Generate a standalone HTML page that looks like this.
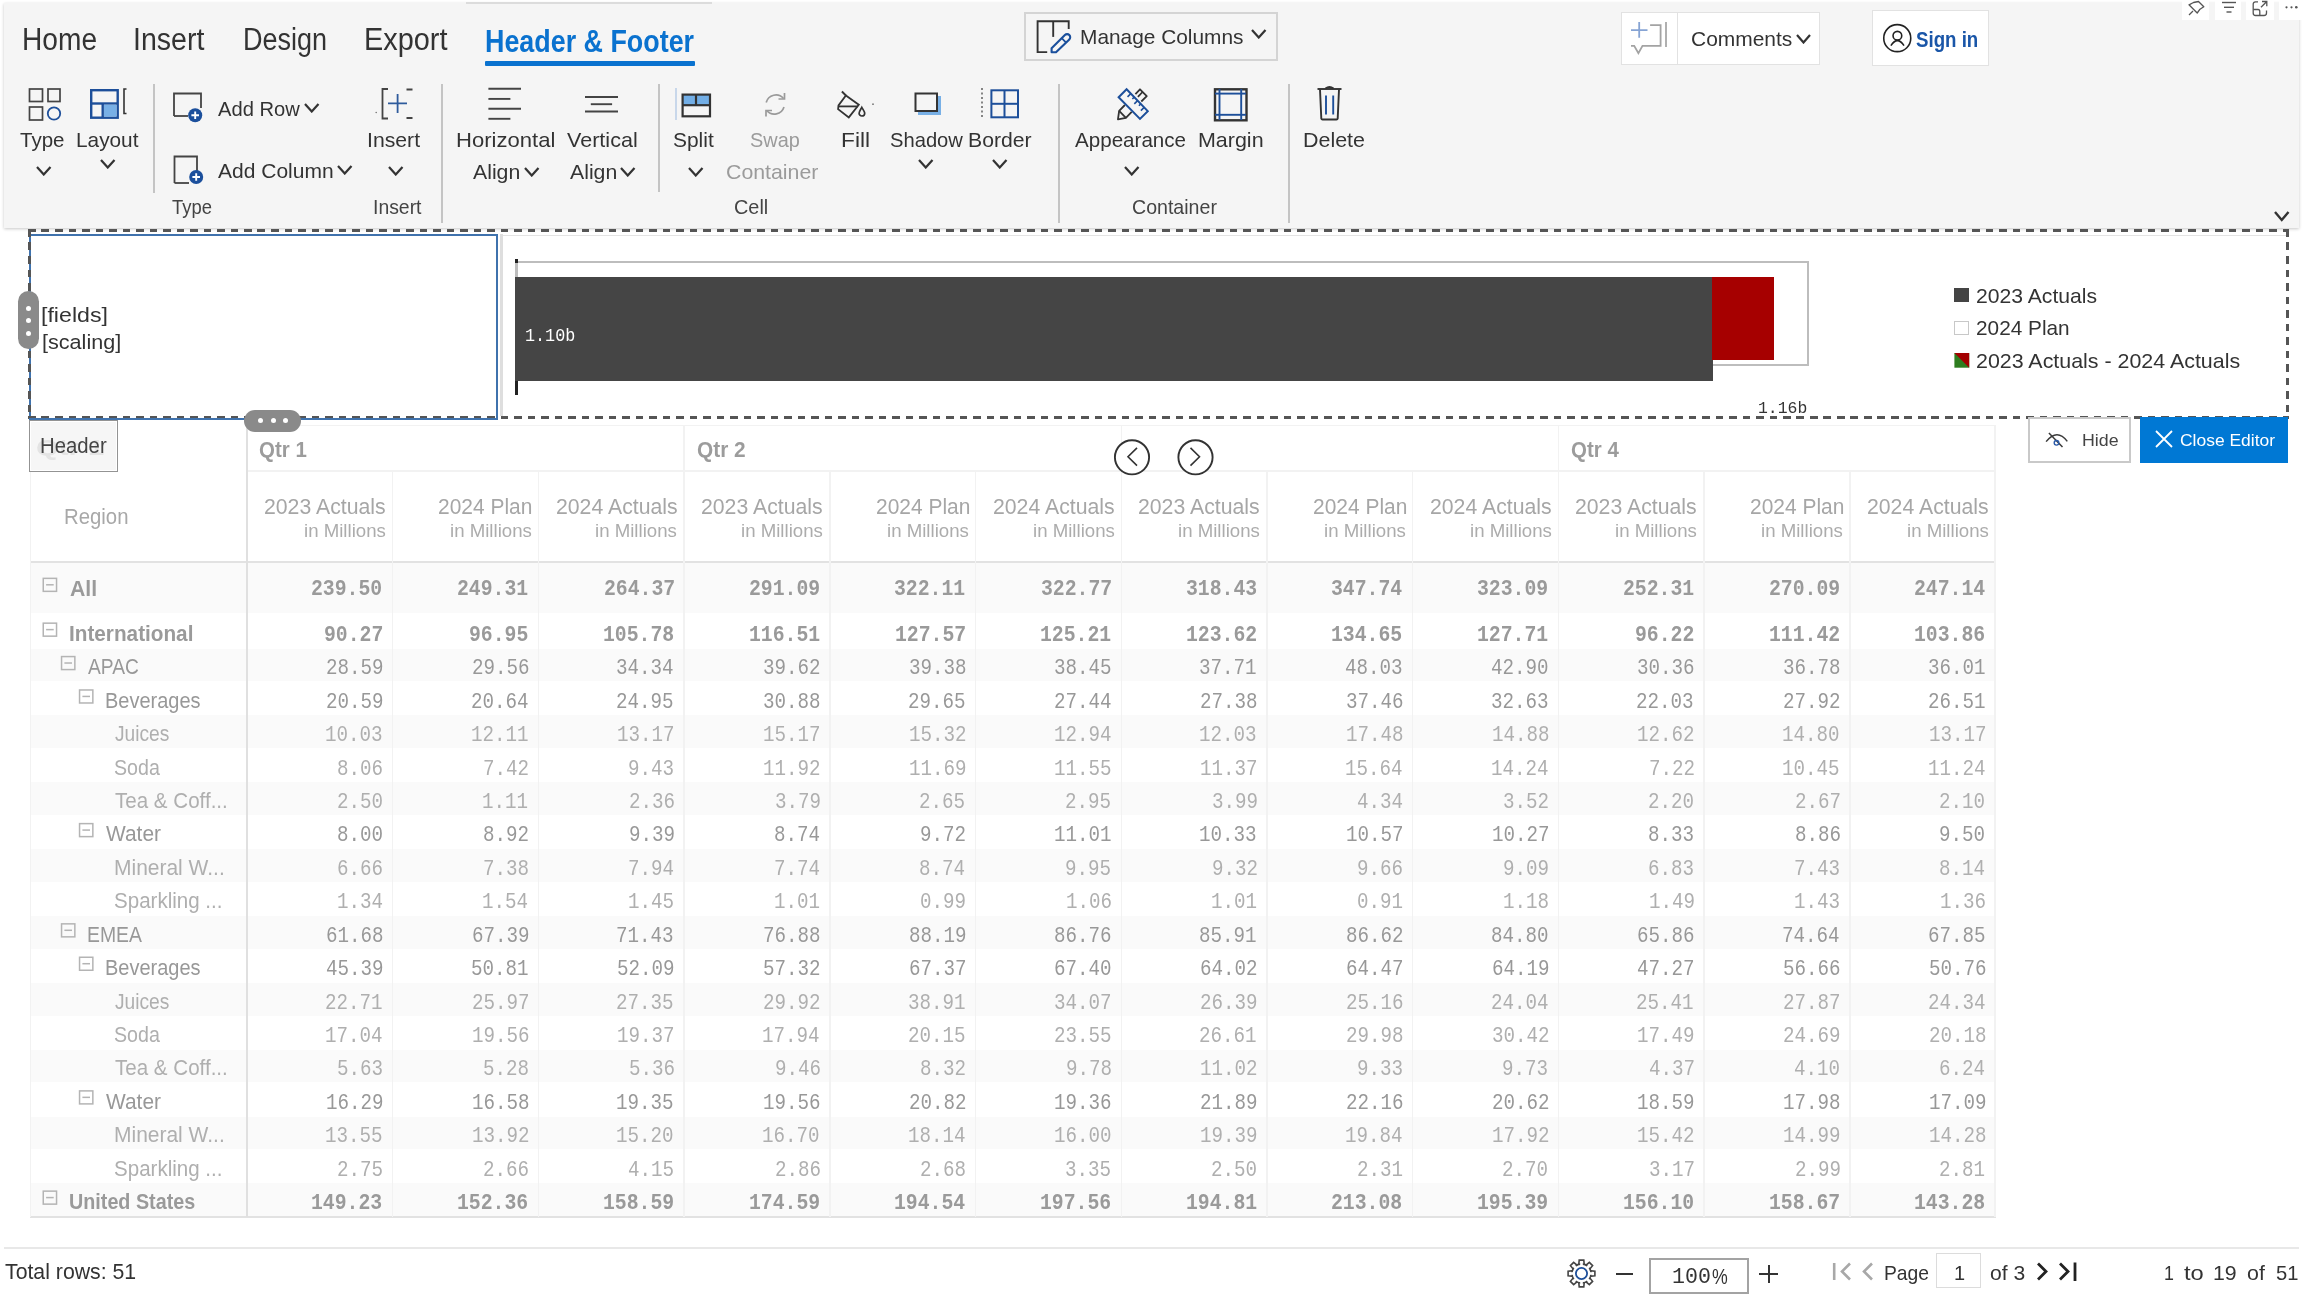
<!DOCTYPE html>
<html><head><meta charset="utf-8"><title>Header &amp; Footer</title>
<style>
html,body{margin:0;padding:0;background:#fff;width:2304px;height:1299px;overflow:hidden;position:relative;font-family:'Liberation Sans',sans-serif}
body>div,body>svg{position:absolute;box-sizing:border-box}
.t{white-space:nowrap;transform-origin:0 0}
</style></head><body>
<div style="left:4.00px;top:3.00px;width:2295.00px;height:225.00px;background:#f5f5f5;box-shadow:0 1px 3px rgba(0,0,0,0.22)"></div>
<div style="left:466.00px;top:2.00px;width:246.00px;height:1.50px;background:#dcdcdc"></div>
<div style="left:2182.00px;top:0.00px;width:27.00px;height:20.00px;background:#fff"></div>
<div style="left:2214.50px;top:0.00px;width:26.50px;height:20.00px;background:#fff"></div>
<div style="left:2246.00px;top:0.00px;width:28.00px;height:20.00px;background:#fff"></div>
<div style="left:2279.00px;top:0.00px;width:25.00px;height:20.00px;background:#fff"></div>
<div class="t" style="left:21.88px;top:25.00px;font-size:30.86px;line-height:30.86px;font-family:'Liberation Sans';color:#333;transform:scaleX(0.9113);">Home</div>
<div class="t" style="left:133.45px;top:25.00px;font-size:30.86px;line-height:30.86px;font-family:'Liberation Sans';color:#333;transform:scaleX(0.9250);">Insert</div>
<div class="t" style="left:242.95px;top:25.00px;font-size:30.86px;line-height:30.86px;font-family:'Liberation Sans';color:#333;transform:scaleX(0.8755);">Design</div>
<div class="t" style="left:363.83px;top:25.00px;font-size:30.86px;line-height:30.86px;font-family:'Liberation Sans';color:#333;transform:scaleX(0.9352);">Export</div>
<div class="t" style="left:484.76px;top:27.00px;font-size:30.86px;line-height:30.86px;font-family:'Liberation Sans';font-weight:bold;color:#0a72cf;transform:scaleX(0.8708);">Header &amp; Footer</div>
<div style="left:485.00px;top:61.00px;width:209.50px;height:4.50px;background:#0a72cf;border-radius:1px"></div>
<svg style="left:26px;top:86px" width="40" height="38" viewBox="0 0 40 38"><g fill="none" stroke="#444" stroke-width="1.7"><rect x="3.5" y="3" width="13" height="12.5"/><rect x="22" y="3" width="12" height="12.5"/><rect x="3.5" y="21" width="13" height="13"/></g><circle cx="28" cy="27.5" r="6.2" fill="none" stroke="#1d4f9a" stroke-width="1.8"/></svg>
<div class="t" style="left:20.30px;top:130.00px;font-size:20.86px;line-height:20.86px;font-family:'Liberation Sans';color:#333;transform:scaleX(0.9844);">Type</div>
<svg style="left:35px;top:165px" width="17" height="11" viewBox="0 0 17 11"><polyline points="2,2 8.75,9.5 15.5,2" fill="none" stroke="#333" stroke-width="2.2" stroke-linejoin="miter"/></svg>
<svg style="left:88px;top:86px" width="42" height="36" viewBox="0 0 42 36"><g fill="none" stroke="#1d4f9a" stroke-width="2.4"><rect x="3.2" y="4.2" width="26.5" height="27.5"/><line x1="3" y1="17.5" x2="30" y2="17.5"/><line x1="14.7" y1="17.5" x2="14.7" y2="31.5"/></g><rect x="16" y="18.8" width="12.5" height="11.8" fill="#78b0e6"/><path d="M38.5 3 H36 V27.5 H38.5" fill="none" stroke="#333" stroke-width="1.6"/></svg>
<div class="t" style="left:76.40px;top:130.00px;font-size:20.86px;line-height:20.86px;font-family:'Liberation Sans';color:#333;transform:scaleX(0.9969);">Layout</div>
<svg style="left:99px;top:158px" width="17" height="11" viewBox="0 0 17 11"><polyline points="2,2 8.75,9.5 15.5,2" fill="none" stroke="#333" stroke-width="2.2" stroke-linejoin="miter"/></svg>
<div style="left:153.00px;top:83.50px;width:2.00px;height:109.50px;background:#c4c4c4"></div>
<svg style="left:170px;top:90px" width="40" height="36" viewBox="0 0 40 36"><path d="M4 26 V3.5 H31 V18" fill="none" stroke="#444" stroke-width="1.8"/><path d="M4 26 H18" fill="none" stroke="#444" stroke-width="1.8"/><circle cx="25.2" cy="25.3" r="7" fill="#1b4f9c"/><path d="M25.2 21.5 V29.1 M21.4 25.3 H29" stroke="#fff" stroke-width="1.9"/></svg>
<div class="t" style="left:217.90px;top:99.00px;font-size:20.71px;line-height:20.71px;font-family:'Liberation Sans';color:#333;transform:scaleX(0.9732);">Add Row</div>
<svg style="left:303px;top:102px" width="17" height="11" viewBox="0 0 17 11"><polyline points="2,2 8.75,9.5 15.5,2" fill="none" stroke="#333" stroke-width="2.2" stroke-linejoin="miter"/></svg>
<svg style="left:170px;top:153px" width="40" height="36" viewBox="0 0 40 36"><path d="M4.5 30 V3.5 H27 V18" fill="none" stroke="#444" stroke-width="1.8"/><path d="M4.5 30 H19" fill="none" stroke="#444" stroke-width="1.8"/><circle cx="26.2" cy="24" r="7" fill="#1b4f9c"/><path d="M26.2 20.2 V27.8 M22.4 24 H30" stroke="#fff" stroke-width="1.9"/></svg>
<div class="t" style="left:217.90px;top:161.00px;font-size:20.71px;line-height:20.71px;font-family:'Liberation Sans';color:#333;transform:scaleX(1.0149);">Add Column</div>
<svg style="left:336px;top:164px" width="17" height="11" viewBox="0 0 17 11"><polyline points="2,2 8.75,9.5 15.5,2" fill="none" stroke="#333" stroke-width="2.2" stroke-linejoin="miter"/></svg>
<div class="t" style="left:172.00px;top:197.00px;font-size:20.43px;line-height:20.43px;font-family:'Liberation Sans';color:#444;transform:scaleX(0.9022);">Type</div>
<svg style="left:366px;top:86px" width="50" height="36" viewBox="0 0 50 36"><path d="M22 3 H16.5 V32.5 H22" fill="none" stroke="#444" stroke-width="1.8"/><path d="M31.6 8 V27 M22 17.3 H41" stroke="#2e5b9c" stroke-width="1.8"/><circle cx="10.2" cy="26.5" r="0.8" fill="#777"/><path d="M40.5 3.5 H46.5 M40.5 32 H46.5" stroke="#444" stroke-width="1.8"/></svg>
<div class="t" style="left:367.28px;top:130.00px;font-size:20.86px;line-height:20.86px;font-family:'Liberation Sans';color:#333;transform:scaleX(1.0168);">Insert</div>
<svg style="left:387px;top:165px" width="17" height="11" viewBox="0 0 17 11"><polyline points="2,2 8.75,9.5 15.5,2" fill="none" stroke="#333" stroke-width="2.2" stroke-linejoin="miter"/></svg>
<div class="t" style="left:373.05px;top:197.00px;font-size:20.43px;line-height:20.43px;font-family:'Liberation Sans';color:#444;transform:scaleX(0.9491);">Insert</div>
<div style="left:440.50px;top:84.00px;width:2.00px;height:139.00px;background:#c4c4c4"></div>
<svg style="left:484px;top:84px" width="42" height="40" viewBox="0 0 42 40"><g stroke="#444" stroke-width="1.9"><line x1="4.4" y1="4.8" x2="37" y2="4.8"/><line x1="4.4" y1="14.9" x2="26.4" y2="14.9"/><line x1="4.4" y1="24.7" x2="37" y2="24.7"/><line x1="4.4" y1="34.8" x2="26.4" y2="34.8"/></g></svg>
<div class="t" style="left:455.94px;top:130.00px;font-size:20.86px;line-height:20.86px;font-family:'Liberation Sans';color:#333;transform:scaleX(1.0574);">Horizontal</div>
<div class="t" style="left:473.30px;top:162.00px;font-size:20.86px;line-height:20.86px;font-family:'Liberation Sans';color:#333;transform:scaleX(1.0184);">Align</div>
<svg style="left:523px;top:166px" width="17" height="11" viewBox="0 0 17 11"><polyline points="2,2 8.75,9.5 15.5,2" fill="none" stroke="#333" stroke-width="2.2" stroke-linejoin="miter"/></svg>
<svg style="left:582px;top:92px" width="40" height="24" viewBox="0 0 40 24"><g stroke="#444" stroke-width="1.9"><line x1="3" y1="5" x2="36" y2="5"/><line x1="8.8" y1="12.2" x2="30.1" y2="12.2"/><line x1="3" y1="19.5" x2="36" y2="19.5"/></g></svg>
<div class="t" style="left:567.00px;top:130.00px;font-size:20.86px;line-height:20.86px;font-family:'Liberation Sans';color:#333;transform:scaleX(1.0336);">Vertical</div>
<div class="t" style="left:569.60px;top:162.00px;font-size:20.86px;line-height:20.86px;font-family:'Liberation Sans';color:#333;transform:scaleX(1.0184);">Align</div>
<svg style="left:619px;top:166px" width="17" height="11" viewBox="0 0 17 11"><polyline points="2,2 8.75,9.5 15.5,2" fill="none" stroke="#333" stroke-width="2.2" stroke-linejoin="miter"/></svg>
<div style="left:657.50px;top:84.00px;width:2.00px;height:108.00px;background:#c4c4c4"></div>
<svg style="left:672px;top:86px" width="44" height="36" viewBox="0 0 44 36"><line x1="4" y1="2" x2="4" y2="34" stroke="#b9cde6" stroke-width="1.5"/><rect x="10.6" y="8.6" width="27.4" height="10.8" fill="#72aee6"/><g fill="none" stroke="#333" stroke-width="2.2"><rect x="10.6" y="8.6" width="27.4" height="21.7"/><line x1="10" y1="19.2" x2="38" y2="19.2"/><line x1="24" y1="8" x2="24" y2="19.5"/></g></svg>
<div class="t" style="left:673.40px;top:130.00px;font-size:20.86px;line-height:20.86px;font-family:'Liberation Sans';color:#333;transform:scaleX(1.0035);">Split</div>
<svg style="left:687px;top:166px" width="17" height="11" viewBox="0 0 17 11"><polyline points="2,2 8.75,9.5 15.5,2" fill="none" stroke="#333" stroke-width="2.2" stroke-linejoin="miter"/></svg>
<svg style="left:760px;top:90px" width="32" height="30" viewBox="0 0 32 30"><g fill="none" stroke="#9a9a9a" stroke-width="1.7"><path d="M23.5 8.5 A10 10 0 0 0 6.2 12.5"/><path d="M6.8 20.5 A10 10 0 0 0 24 17"/><path d="M24.5 3 V9 H18.5"/><path d="M6 26.5 V20.5 H12"/></g></svg>
<div class="t" style="left:750.30px;top:130.00px;font-size:20.43px;line-height:20.43px;font-family:'Liberation Sans';color:#9b9b9b;transform:scaleX(0.9744);">Swap</div>
<div class="t" style="left:726.36px;top:162.00px;font-size:20.43px;line-height:20.43px;font-family:'Liberation Sans';color:#9b9b9b;transform:scaleX(1.0435);">Container</div>
<div class="t" style="left:733.83px;top:197.00px;font-size:20.43px;line-height:20.43px;font-family:'Liberation Sans';color:#444;transform:scaleX(0.9727);">Cell</div>
<svg style="left:834px;top:88px" width="42" height="34" viewBox="0 0 42 34"><g fill="none" stroke="#333" stroke-width="1.8" stroke-linejoin="miter"><path d="M7.9 3.5 L11.9 7.5"/><path d="M11.9 7.5 L24.8 16.7 L14.8 29.4 L4.1 21.1 L4.5 17.4 Z"/><line x1="4.5" y1="18.4" x2="23.8" y2="18.4"/><path d="M27.8 19.3 C26.2 22.3 25.1 23.8 25.1 25.2 A2.8 2.8 0 0 0 30.7 25.2 C30.7 23.8 29.5 22.3 27.8 19.3 Z" stroke-width="1.7"/></g><circle cx="39" cy="16.2" r="0.9" fill="#777"/></svg>
<div class="t" style="left:841.39px;top:130.00px;font-size:20.43px;line-height:20.43px;font-family:'Liberation Sans';color:#333;transform:scaleX(1.1128);">Fill</div>
<svg style="left:910px;top:88px" width="36" height="32" viewBox="0 0 36 32"><rect x="8" y="8" width="23" height="19" fill="#78b0e6"/><rect x="5.5" y="5.5" width="21.5" height="17.5" fill="#f5f5f5" stroke="#333" stroke-width="2"/></svg>
<div class="t" style="left:889.70px;top:130.00px;font-size:20.43px;line-height:20.43px;font-family:'Liberation Sans';color:#333;transform:scaleX(0.9877);">Shadow</div>
<svg style="left:917px;top:158px" width="17" height="11" viewBox="0 0 17 11"><polyline points="2,2 8.75,9.5 15.5,2" fill="none" stroke="#333" stroke-width="2.2" stroke-linejoin="miter"/></svg>
<svg style="left:978px;top:86px" width="44" height="36" viewBox="0 0 44 36"><line x1="4" y1="2" x2="4" y2="33" stroke="#555" stroke-width="1.4" stroke-dasharray="2 2.5"/><g fill="none" stroke="#1d4f9a" stroke-width="2"><rect x="13.4" y="4.3" width="26.6" height="27"/><line x1="26.5" y1="4" x2="26.5" y2="31"/><line x1="13" y1="17.8" x2="40" y2="17.8"/></g></svg>
<div class="t" style="left:967.66px;top:130.00px;font-size:20.43px;line-height:20.43px;font-family:'Liberation Sans';color:#333;transform:scaleX(1.0372);">Border</div>
<svg style="left:991px;top:158px" width="17" height="11" viewBox="0 0 17 11"><polyline points="2,2 8.75,9.5 15.5,2" fill="none" stroke="#333" stroke-width="2.2" stroke-linejoin="miter"/></svg>
<div style="left:1058.00px;top:84.00px;width:2.00px;height:139.00px;background:#c4c4c4"></div>
<svg style="left:1114px;top:86px" width="38" height="36" viewBox="0 0 38 36"><g fill="none" stroke="#333" stroke-width="1.8" stroke-linejoin="round"><path d="M10.9 19 L5.15 24.8 L3.96 33.3 L11.9 31.9 L17.7 25.8"/><path d="M5.15 24.8 L11.9 31.9"/><path d="M21.4 8.2 L26 3.3 L32.75 10.2 L27.3 15.5"/><path d="M23.9 10.8 L28.5 6"/></g><path d="M4.64 11.24 L12.6 3.28 L33.77 25.13 L25.98 32.92 Z" fill="#f5f5f5" stroke="#1d4f9a" stroke-width="2" stroke-linejoin="miter"/><path d="M16.83 7.65 l-3.30 3.20 M20.22 11.15 l-1.87 1.81 M23.61 14.64 l-3.30 3.20 M26.78 17.92 l-1.87 1.81 M30.17 21.42 l-3.30 3.20 " stroke="#1d4f9a" stroke-width="1.6"/></svg>
<div class="t" style="left:1075.00px;top:130.00px;font-size:20.43px;line-height:20.43px;font-family:'Liberation Sans';color:#333;transform:scaleX(1.0082);">Appearance</div>
<svg style="left:1123px;top:165px" width="17" height="11" viewBox="0 0 17 11"><polyline points="2,2 8.75,9.5 15.5,2" fill="none" stroke="#333" stroke-width="2.2" stroke-linejoin="miter"/></svg>
<svg style="left:1210px;top:85px" width="40" height="38" viewBox="0 0 40 38"><rect x="5" y="4.3" width="31.5" height="31" fill="none" stroke="#333" stroke-width="2.4"/><g stroke="#1d4f9a" stroke-width="1.9"><line x1="9.5" y1="4" x2="9.5" y2="35"/><line x1="31.2" y1="4" x2="31.2" y2="35"/><line x1="5" y1="8.6" x2="36" y2="8.6"/><line x1="5" y1="29.8" x2="36" y2="29.8"/></g></svg>
<div class="t" style="left:1197.85px;top:130.00px;font-size:20.43px;line-height:20.43px;font-family:'Liberation Sans';color:#333;transform:scaleX(1.0504);">Margin</div>
<div class="t" style="left:1131.54px;top:197.00px;font-size:20.43px;line-height:20.43px;font-family:'Liberation Sans';color:#444;transform:scaleX(0.9591);">Container</div>
<div style="left:1287.50px;top:84.00px;width:2.00px;height:139.00px;background:#c4c4c4"></div>
<svg style="left:1312px;top:84px" width="36" height="40" viewBox="0 0 36 40"><g fill="none" stroke="#333" stroke-width="1.9" stroke-linejoin="round"><path d="M5.5 5 H29.5"/><path d="M13.5 4.5 Q17.5 1.5 21.5 4.5"/><path d="M8 5.5 L9.3 34.5 Q9.5 35.5 10.5 35.5 H24.5 Q25.5 35.5 25.7 34.5 L27 5.5"/></g><g stroke="#1d4f9a" stroke-width="1.9"><line x1="14" y1="11.5" x2="14" y2="30.5"/><line x1="21.2" y1="11.5" x2="21.2" y2="30.5"/></g></svg>
<div class="t" style="left:1302.65px;top:130.00px;font-size:20.43px;line-height:20.43px;font-family:'Liberation Sans';color:#333;transform:scaleX(1.0497);">Delete</div>
<div style="left:1024.00px;top:12.40px;width:254.20px;height:48.70px;border:2px solid #d4d4d4"></div>
<svg style="left:1034px;top:18px" width="40" height="40" viewBox="0 0 40 40"><path d="M13.2 34.1 H3.6 V3.3 H34.7 V10.9" fill="none" stroke="#333" stroke-width="1.9"/><line x1="19.2" y1="3.3" x2="19.2" y2="18.9" stroke="#333" stroke-width="1.9"/><path d="M17.6 34.3 L17.6 30.3 L30.9 17 A3.1 3.1 0 0 1 35.3 21.4 L22 34.3 Z" fill="none" stroke="#1a4f9c" stroke-width="2.1" stroke-linejoin="round"/><line x1="27.7" y1="20.2" x2="32.1" y2="24.6" stroke="#1a4f9c" stroke-width="1.8"/></svg>
<div class="t" style="left:1080.21px;top:26.00px;font-size:21.00px;line-height:21.00px;font-family:'Liberation Sans';color:#333;transform:scaleX(0.9933);">Manage Columns</div>
<svg style="left:1250px;top:28px" width="17" height="11" viewBox="0 0 17 11"><polyline points="2,2 8.75,9.5 15.5,2" fill="none" stroke="#333" stroke-width="2.2" stroke-linejoin="miter"/></svg>
<div style="left:1620.50px;top:12.40px;width:199.90px;height:52.80px;background:#fff;border:1.5px solid #e2e2e2"></div>
<div style="left:1676.50px;top:13.00px;width:1.50px;height:52.00px;background:#e2e2e2"></div>
<svg style="left:1628px;top:19px" width="44" height="40" viewBox="0 0 44 40"><path d="M3 11.1 H19.5 M11.2 3.1 V18.7" stroke="#86a4d4" stroke-width="1.8"/><path d="M22.1 6.1 H32.6 V26.8 H14.5 L10.4 34.2 L6.2 26.8 H3" fill="none" stroke="#a3a3a3" stroke-width="1.8" stroke-linejoin="miter"/><line x1="38" y1="2.9" x2="38" y2="28.1" stroke="#a8a8a8" stroke-width="1.8"/></svg>
<div class="t" style="left:1690.97px;top:29.00px;font-size:20.43px;line-height:20.43px;font-family:'Liberation Sans';color:#333;transform:scaleX(1.0262);">Comments</div>
<svg style="left:1795px;top:33px" width="17" height="11" viewBox="0 0 17 11"><polyline points="2,2 8.5,9.5 15,2" fill="none" stroke="#333" stroke-width="2.2" stroke-linejoin="miter"/></svg>
<div style="left:1872.40px;top:9.80px;width:116.40px;height:56.60px;background:#fff;border:1.5px solid #e2e2e2"></div>
<svg style="left:1880px;top:21px" width="36" height="36" viewBox="0 0 36 36"><circle cx="17.25" cy="17.17" r="13.5" fill="none" stroke="#222" stroke-width="1.6"/><circle cx="17.4" cy="14.7" r="4.35" fill="none" stroke="#222" stroke-width="1.6"/><path d="M10.9 24.6 Q17.4 14.6 24 24.6" fill="none" stroke="#222" stroke-width="1.6"/></svg>
<div class="t" style="left:1916.40px;top:29.00px;font-size:21.71px;line-height:21.71px;font-family:'Liberation Sans';font-weight:bold;color:#1a56a8;transform:scaleX(0.8610);">Sign in</div>
<svg style="left:2186px;top:0px" width="22" height="18" viewBox="0 0 22 18"><g fill="none" stroke="#555" stroke-width="1.3" stroke-linejoin="round"><path d="M13.5 1.5 L18.8 6.8 L15 9.2 L12.2 13 L4 4.8 L8.5 2.5 Z" transform="translate(-1,0)"/><line x1="7" y1="11" x2="3" y2="15"/></g></svg>
<svg style="left:2219px;top:0px" width="20" height="16" viewBox="0 0 20 16"><g stroke="#555" stroke-width="1.4"><line x1="3" y1="2.5" x2="17" y2="2.5"/><line x1="5" y1="7.3" x2="15" y2="7.3"/><line x1="7.5" y1="12" x2="12.5" y2="12"/></g></svg>
<svg style="left:2251px;top:0px" width="20" height="18" viewBox="0 0 20 18"><g fill="none" stroke="#555" stroke-width="1.3"><path d="M7 1.8 H4.5 Q2.2 1.8 2.2 4 V13 Q2.2 15.5 4.5 15.5 H13 Q15.5 15.5 15.5 13 V10.5"/><path d="M2.2 9.5 H7 Q8.8 9.5 8.8 11.5 V15.5"/><path d="M11 1.5 H15.8 V6.3 M15.8 1.5 L10 7.3"/></g></svg>
<svg style="left:2283px;top:3px" width="20" height="10" viewBox="0 0 20 10"><g fill="#555"><circle cx="3.5" cy="4.3" r="1.1"/><circle cx="8.5" cy="4.3" r="1.1"/><circle cx="13.3" cy="4.3" r="1.3"/></g></svg>
<svg style="left:2273px;top:210px" width="17" height="12" viewBox="0 0 17 12"><polyline points="2,2 8.75,10 15.5,2" fill="none" stroke="#333" stroke-width="2.4" stroke-linejoin="miter"/></svg>
<div style="left:29.00px;top:234.00px;width:469.00px;height:186.00px;background:#fff;border:2px solid #3f72ad"></div>
<div style="left:500.00px;top:233.50px;width:3.00px;height:182.50px;background:#dedede"></div>
<div style="left:503.00px;top:234.50px;width:1784.00px;height:1.50px;background:#e3e3e3"></div>
<div style="left:28.00px;top:229.20px;width:2261.00px;height:2.50px;background:repeating-linear-gradient(90deg,#555 0 7.8px,transparent 7.8px 13.5px);background-position:0 0"></div>
<div style="left:28.00px;top:416.00px;width:2261.00px;height:2.50px;background:repeating-linear-gradient(90deg,#555 0 7.8px,transparent 7.8px 13.5px);background-position:0 0"></div>
<div style="left:28.00px;top:229.20px;width:2.50px;height:189.30px;background:repeating-linear-gradient(180deg,#555 0 7.8px,transparent 7.8px 13.5px)"></div>
<div style="left:2286.30px;top:229.20px;width:2.50px;height:189.30px;background:repeating-linear-gradient(180deg,#555 0 7.8px,transparent 7.8px 13.5px)"></div>
<div style="left:29.00px;top:418.00px;width:469.00px;height:2.00px;background:#3f72ad"></div>
<div class="t" style="left:41.47px;top:305.00px;font-size:20.50px;line-height:20.50px;font-family:'Liberation Sans';color:#333;transform:scaleX(1.1294);">[fields]</div>
<div class="t" style="left:41.55px;top:332.00px;font-size:20.50px;line-height:20.50px;font-family:'Liberation Sans';color:#333;transform:scaleX(1.0529);">[scaling]</div>
<div style="left:18.00px;top:291.00px;width:21.20px;height:57.80px;background:#8a8a8a;border-radius:11px"></div>
<div style="left:25.80px;top:305.50px;width:5.00px;height:5.00px;background:#fff;border-radius:50%"></div>
<div style="left:25.80px;top:318.20px;width:5.00px;height:5.00px;background:#fff;border-radius:50%"></div>
<div style="left:25.80px;top:330.80px;width:5.00px;height:5.00px;background:#fff;border-radius:50%"></div>
<div style="left:516.00px;top:261.00px;width:1293.00px;height:104.50px;border:2px solid #bdbdbd"></div>
<div style="left:516.00px;top:277.00px;width:1197.00px;height:104.00px;background:#454545"></div>
<div style="left:1711.70px;top:277.00px;width:62.30px;height:83.30px;background:#a60000"></div>
<div style="left:515.00px;top:258.70px;width:3.40px;height:3.90px;background:#222"></div>
<div style="left:515.00px;top:262.60px;width:3.40px;height:14.40px;background:#bdbdbd"></div>
<div style="left:515.00px;top:277.00px;width:3.40px;height:104.00px;background:#454545"></div>
<div style="left:515.00px;top:381.00px;width:3.40px;height:14.40px;background:#222"></div>
<div class="t" style="left:525.49px;top:328.00px;font-size:18.38px;line-height:18.38px;font-family:'Liberation Mono';color:#fff;transform:scaleX(0.9132);">1.10b</div>
<div class="t" style="left:1758.04px;top:400.00px;font-size:17.21px;line-height:17.21px;font-family:'Liberation Mono';color:#333;transform:scaleX(0.9551);">1.16b</div>
<div style="left:1954.40px;top:288.40px;width:14.80px;height:13.60px;background:#444"></div>
<div style="left:1954.40px;top:320.80px;width:14.80px;height:14.50px;background:#fff;border:1.5px solid #c8c8c8"></div>
<svg style="left:1954px;top:353px" width="16" height="15" viewBox="0 0 16 15"><rect x="0.4" y="0" width="14.8" height="14.7" fill="#2e7d1f"/><path d="M0.4 0 H15.2 V14.7 Z" fill="#a30000"/></svg>
<div class="t" style="left:1976.17px;top:286.00px;font-size:20.57px;line-height:20.57px;font-family:'Liberation Sans';color:#333;transform:scaleX(1.0280);">2023 Actuals</div>
<div class="t" style="left:1976.19px;top:318.00px;font-size:20.57px;line-height:20.57px;font-family:'Liberation Sans';color:#333;transform:scaleX(1.0112);">2024 Plan</div>
<div class="t" style="left:1976.16px;top:351.00px;font-size:20.57px;line-height:20.57px;font-family:'Liberation Sans';color:#333;transform:scaleX(1.0406);">2023 Actuals - 2024 Actuals</div>
<div style="left:30.00px;top:562.00px;width:1965.50px;height:51.00px;background:#fafafa"></div>
<div style="left:30.00px;top:648.60px;width:1965.50px;height:32.70px;background:#fafafa"></div>
<div style="left:30.00px;top:715.46px;width:1965.50px;height:32.70px;background:#fafafa"></div>
<div style="left:30.00px;top:782.32px;width:1965.50px;height:32.70px;background:#fafafa"></div>
<div style="left:30.00px;top:849.18px;width:1965.50px;height:32.70px;background:#fafafa"></div>
<div style="left:30.00px;top:916.04px;width:1965.50px;height:32.70px;background:#fafafa"></div>
<div style="left:30.00px;top:982.90px;width:1965.50px;height:32.70px;background:#fafafa"></div>
<div style="left:30.00px;top:1049.76px;width:1965.50px;height:32.70px;background:#fafafa"></div>
<div style="left:30.00px;top:1116.62px;width:1965.50px;height:32.70px;background:#fafafa"></div>
<div style="left:30.00px;top:1183.48px;width:1965.50px;height:32.70px;background:#fafafa"></div>
<div style="left:247.00px;top:424.50px;width:1748.50px;height:1.50px;background:#f2f2f2"></div>
<div style="left:247.00px;top:470.00px;width:1748.50px;height:1.50px;background:#f2f2f2"></div>
<div style="left:30.00px;top:560.50px;width:1965.50px;height:2.00px;background:#e2e2e2"></div>
<div style="left:30.00px;top:1216.00px;width:1965.50px;height:2.00px;background:#e2e2e2"></div>
<div style="left:29.50px;top:471.00px;width:1.50px;height:746.00px;background:#f2f2f2"></div>
<div style="left:246.00px;top:425.00px;width:2.30px;height:792.00px;background:#e0e0e0"></div>
<div style="left:391.96px;top:471.00px;width:1.50px;height:746.00px;background:#f2f2f2"></div>
<div style="left:537.67px;top:471.00px;width:1.50px;height:746.00px;background:#f2f2f2"></div>
<div style="left:683.38px;top:425.00px;width:1.50px;height:792.00px;background:#f2f2f2"></div>
<div style="left:829.08px;top:471.00px;width:1.50px;height:746.00px;background:#f2f2f2"></div>
<div style="left:974.79px;top:471.00px;width:1.50px;height:746.00px;background:#f2f2f2"></div>
<div style="left:1120.50px;top:425.00px;width:1.50px;height:792.00px;background:#f2f2f2"></div>
<div style="left:1266.21px;top:471.00px;width:1.50px;height:746.00px;background:#f2f2f2"></div>
<div style="left:1411.92px;top:471.00px;width:1.50px;height:746.00px;background:#f2f2f2"></div>
<div style="left:1557.62px;top:425.00px;width:1.50px;height:792.00px;background:#f2f2f2"></div>
<div style="left:1703.33px;top:471.00px;width:1.50px;height:746.00px;background:#f2f2f2"></div>
<div style="left:1849.04px;top:471.00px;width:1.50px;height:746.00px;background:#f2f2f2"></div>
<div style="left:1994.00px;top:425.00px;width:1.50px;height:792.00px;background:#f2f2f2"></div>
<div class="t" style="left:259.40px;top:438.00px;font-size:22.86px;line-height:22.86px;font-family:'Liberation Sans';font-weight:bold;color:#9c9c9c;transform:scaleX(0.8953);">Qtr 1</div>
<div class="t" style="left:696.52px;top:438.00px;font-size:22.86px;line-height:22.86px;font-family:'Liberation Sans';font-weight:bold;color:#9c9c9c;transform:scaleX(0.9123);">Qtr 2</div>
<div class="t" style="left:1570.78px;top:438.00px;font-size:22.86px;line-height:22.86px;font-family:'Liberation Sans';font-weight:bold;color:#9c9c9c;transform:scaleX(0.8953);">Qtr 4</div>
<div class="t" style="left:264.12px;top:497.00px;font-size:21.43px;line-height:21.43px;font-family:'Liberation Sans';color:#a6a6a6;transform:scaleX(0.9913);">2023 Actuals</div>
<div class="t" style="left:304.05px;top:523.00px;font-size:17.71px;line-height:17.71px;font-family:'Liberation Sans';color:#acacac;transform:scaleX(1.0538);">in Millions</div>
<div class="t" style="left:438.44px;top:497.00px;font-size:21.43px;line-height:21.43px;font-family:'Liberation Sans';color:#a6a6a6;transform:scaleX(0.9777);">2024 Plan</div>
<div class="t" style="left:449.76px;top:523.00px;font-size:17.71px;line-height:17.71px;font-family:'Liberation Sans';color:#acacac;transform:scaleX(1.0538);">in Millions</div>
<div class="t" style="left:555.53px;top:497.00px;font-size:21.43px;line-height:21.43px;font-family:'Liberation Sans';color:#a6a6a6;transform:scaleX(0.9913);">2024 Actuals</div>
<div class="t" style="left:595.47px;top:523.00px;font-size:17.71px;line-height:17.71px;font-family:'Liberation Sans';color:#acacac;transform:scaleX(1.0538);">in Millions</div>
<div class="t" style="left:701.24px;top:497.00px;font-size:21.43px;line-height:21.43px;font-family:'Liberation Sans';color:#a6a6a6;transform:scaleX(0.9913);">2023 Actuals</div>
<div class="t" style="left:741.18px;top:523.00px;font-size:17.71px;line-height:17.71px;font-family:'Liberation Sans';color:#acacac;transform:scaleX(1.0538);">in Millions</div>
<div class="t" style="left:875.56px;top:497.00px;font-size:21.43px;line-height:21.43px;font-family:'Liberation Sans';color:#a6a6a6;transform:scaleX(0.9777);">2024 Plan</div>
<div class="t" style="left:886.89px;top:523.00px;font-size:17.71px;line-height:17.71px;font-family:'Liberation Sans';color:#acacac;transform:scaleX(1.0538);">in Millions</div>
<div class="t" style="left:992.66px;top:497.00px;font-size:21.43px;line-height:21.43px;font-family:'Liberation Sans';color:#a6a6a6;transform:scaleX(0.9913);">2024 Actuals</div>
<div class="t" style="left:1032.60px;top:523.00px;font-size:17.71px;line-height:17.71px;font-family:'Liberation Sans';color:#acacac;transform:scaleX(1.0538);">in Millions</div>
<div class="t" style="left:1138.37px;top:497.00px;font-size:21.43px;line-height:21.43px;font-family:'Liberation Sans';color:#a6a6a6;transform:scaleX(0.9913);">2023 Actuals</div>
<div class="t" style="left:1178.30px;top:523.00px;font-size:17.71px;line-height:17.71px;font-family:'Liberation Sans';color:#acacac;transform:scaleX(1.0538);">in Millions</div>
<div class="t" style="left:1312.69px;top:497.00px;font-size:21.43px;line-height:21.43px;font-family:'Liberation Sans';color:#a6a6a6;transform:scaleX(0.9777);">2024 Plan</div>
<div class="t" style="left:1324.01px;top:523.00px;font-size:17.71px;line-height:17.71px;font-family:'Liberation Sans';color:#acacac;transform:scaleX(1.0538);">in Millions</div>
<div class="t" style="left:1429.78px;top:497.00px;font-size:21.43px;line-height:21.43px;font-family:'Liberation Sans';color:#a6a6a6;transform:scaleX(0.9913);">2024 Actuals</div>
<div class="t" style="left:1469.72px;top:523.00px;font-size:17.71px;line-height:17.71px;font-family:'Liberation Sans';color:#acacac;transform:scaleX(1.0538);">in Millions</div>
<div class="t" style="left:1575.49px;top:497.00px;font-size:21.43px;line-height:21.43px;font-family:'Liberation Sans';color:#a6a6a6;transform:scaleX(0.9913);">2023 Actuals</div>
<div class="t" style="left:1615.43px;top:523.00px;font-size:17.71px;line-height:17.71px;font-family:'Liberation Sans';color:#acacac;transform:scaleX(1.0538);">in Millions</div>
<div class="t" style="left:1749.81px;top:497.00px;font-size:21.43px;line-height:21.43px;font-family:'Liberation Sans';color:#a6a6a6;transform:scaleX(0.9777);">2024 Plan</div>
<div class="t" style="left:1761.14px;top:523.00px;font-size:17.71px;line-height:17.71px;font-family:'Liberation Sans';color:#acacac;transform:scaleX(1.0538);">in Millions</div>
<div class="t" style="left:1866.91px;top:497.00px;font-size:21.43px;line-height:21.43px;font-family:'Liberation Sans';color:#a6a6a6;transform:scaleX(0.9913);">2024 Actuals</div>
<div class="t" style="left:1906.85px;top:523.00px;font-size:17.71px;line-height:17.71px;font-family:'Liberation Sans';color:#acacac;transform:scaleX(1.0538);">in Millions</div>
<div class="t" style="left:63.68px;top:506.00px;font-size:22.00px;line-height:22.00px;font-family:'Liberation Sans';color:#a8a8a8;transform:scaleX(0.9247);">Region</div>
<div class="t" style="left:69.90px;top:577.00px;font-size:22.86px;line-height:22.86px;font-family:'Liberation Sans';font-weight:bold;color:#9a9a9a;transform:scaleX(0.9302);">All</div>
<svg style="left:41px;top:576px" width="18" height="17" viewBox="0 0 18 17"><rect x="2.25" y="2.35" width="13.3" height="13" fill="none" stroke="#b4b4b4" stroke-width="1.5"/><line x1="5.10" y1="8.80" x2="12.70" y2="8.80" stroke="#b4b4b4" stroke-width="1.5"/></svg>
<div class="t" style="left:311.47px;top:578.00px;font-size:22.40px;line-height:22.40px;font-family:'Liberation Mono';font-weight:bold;color:#9a9a9a;transform:scaleX(0.8834);">239.50</div>
<div class="t" style="left:457.18px;top:578.00px;font-size:22.40px;line-height:22.40px;font-family:'Liberation Mono';font-weight:bold;color:#9a9a9a;transform:scaleX(0.8834);">249.31</div>
<div class="t" style="left:603.77px;top:578.00px;font-size:22.40px;line-height:22.40px;font-family:'Liberation Mono';font-weight:bold;color:#9a9a9a;transform:scaleX(0.8834);">264.37</div>
<div class="t" style="left:748.60px;top:578.00px;font-size:22.40px;line-height:22.40px;font-family:'Liberation Mono';font-weight:bold;color:#9a9a9a;transform:scaleX(0.8834);">291.09</div>
<div class="t" style="left:894.30px;top:578.00px;font-size:22.40px;line-height:22.40px;font-family:'Liberation Mono';font-weight:bold;color:#9a9a9a;transform:scaleX(0.8834);">322.11</div>
<div class="t" style="left:1040.90px;top:578.00px;font-size:22.40px;line-height:22.40px;font-family:'Liberation Mono';font-weight:bold;color:#9a9a9a;transform:scaleX(0.8834);">322.77</div>
<div class="t" style="left:1185.72px;top:578.00px;font-size:22.40px;line-height:22.40px;font-family:'Liberation Mono';font-weight:bold;color:#9a9a9a;transform:scaleX(0.8834);">318.43</div>
<div class="t" style="left:1331.43px;top:578.00px;font-size:22.40px;line-height:22.40px;font-family:'Liberation Mono';font-weight:bold;color:#9a9a9a;transform:scaleX(0.8834);">347.74</div>
<div class="t" style="left:1477.14px;top:578.00px;font-size:22.40px;line-height:22.40px;font-family:'Liberation Mono';font-weight:bold;color:#9a9a9a;transform:scaleX(0.8834);">323.09</div>
<div class="t" style="left:1622.85px;top:578.00px;font-size:22.40px;line-height:22.40px;font-family:'Liberation Mono';font-weight:bold;color:#9a9a9a;transform:scaleX(0.8834);">252.31</div>
<div class="t" style="left:1768.55px;top:578.00px;font-size:22.40px;line-height:22.40px;font-family:'Liberation Mono';font-weight:bold;color:#9a9a9a;transform:scaleX(0.8834);">270.09</div>
<div class="t" style="left:1914.26px;top:578.00px;font-size:22.40px;line-height:22.40px;font-family:'Liberation Mono';font-weight:bold;color:#9a9a9a;transform:scaleX(0.8834);">247.14</div>
<div class="t" style="left:68.99px;top:622.00px;font-size:22.86px;line-height:22.86px;font-family:'Liberation Sans';font-weight:bold;color:#9a9a9a;transform:scaleX(0.9070);">International</div>
<svg style="left:41px;top:621px" width="18" height="17" viewBox="0 0 18 17"><rect x="2.25" y="2.16" width="13.3" height="13" fill="none" stroke="#b4b4b4" stroke-width="1.5"/><line x1="5.10" y1="8.61" x2="12.70" y2="8.61" stroke="#b4b4b4" stroke-width="1.5"/></svg>
<div class="t" style="left:324.22px;top:624.00px;font-size:22.40px;line-height:22.40px;font-family:'Liberation Mono';font-weight:bold;color:#9a9a9a;transform:scaleX(0.8834);">90.27</div>
<div class="t" style="left:469.05px;top:624.00px;font-size:22.40px;line-height:22.40px;font-family:'Liberation Mono';font-weight:bold;color:#9a9a9a;transform:scaleX(0.8834);">96.95</div>
<div class="t" style="left:602.89px;top:624.00px;font-size:22.40px;line-height:22.40px;font-family:'Liberation Mono';font-weight:bold;color:#9a9a9a;transform:scaleX(0.8834);">105.78</div>
<div class="t" style="left:748.60px;top:624.00px;font-size:22.40px;line-height:22.40px;font-family:'Liberation Mono';font-weight:bold;color:#9a9a9a;transform:scaleX(0.8834);">116.51</div>
<div class="t" style="left:895.19px;top:624.00px;font-size:22.40px;line-height:22.40px;font-family:'Liberation Mono';font-weight:bold;color:#9a9a9a;transform:scaleX(0.8834);">127.57</div>
<div class="t" style="left:1040.01px;top:624.00px;font-size:22.40px;line-height:22.40px;font-family:'Liberation Mono';font-weight:bold;color:#9a9a9a;transform:scaleX(0.8834);">125.21</div>
<div class="t" style="left:1185.72px;top:624.00px;font-size:22.40px;line-height:22.40px;font-family:'Liberation Mono';font-weight:bold;color:#9a9a9a;transform:scaleX(0.8834);">123.62</div>
<div class="t" style="left:1331.43px;top:624.00px;font-size:22.40px;line-height:22.40px;font-family:'Liberation Mono';font-weight:bold;color:#9a9a9a;transform:scaleX(0.8834);">134.65</div>
<div class="t" style="left:1477.14px;top:624.00px;font-size:22.40px;line-height:22.40px;font-family:'Liberation Mono';font-weight:bold;color:#9a9a9a;transform:scaleX(0.8834);">127.71</div>
<div class="t" style="left:1634.72px;top:624.00px;font-size:22.40px;line-height:22.40px;font-family:'Liberation Mono';font-weight:bold;color:#9a9a9a;transform:scaleX(0.8834);">96.22</div>
<div class="t" style="left:1768.55px;top:624.00px;font-size:22.40px;line-height:22.40px;font-family:'Liberation Mono';font-weight:bold;color:#9a9a9a;transform:scaleX(0.8834);">111.42</div>
<div class="t" style="left:1914.26px;top:624.00px;font-size:22.40px;line-height:22.40px;font-family:'Liberation Mono';font-weight:bold;color:#9a9a9a;transform:scaleX(0.8834);">103.86</div>
<div class="t" style="left:87.90px;top:655.00px;font-size:22.86px;line-height:22.86px;font-family:'Liberation Sans';color:#989898;transform:scaleX(0.8398);">APAC</div>
<svg style="left:59px;top:654px" width="18" height="17" viewBox="0 0 18 17"><rect x="2.55" y="2.57" width="13.3" height="13" fill="none" stroke="#b4b4b4" stroke-width="1.5"/><line x1="5.40" y1="9.02" x2="13.00" y2="9.02" stroke="#b4b4b4" stroke-width="1.5"/></svg>
<div class="t" style="left:325.91px;top:657.00px;font-size:22.40px;line-height:22.40px;font-family:'Liberation Mono';color:#989898;transform:scaleX(0.8578);">28.59</div>
<div class="t" style="left:471.62px;top:657.00px;font-size:22.40px;line-height:22.40px;font-family:'Liberation Mono';color:#989898;transform:scaleX(0.8578);">29.56</div>
<div class="t" style="left:616.47px;top:657.00px;font-size:22.40px;line-height:22.40px;font-family:'Liberation Mono';color:#989898;transform:scaleX(0.8578);">34.34</div>
<div class="t" style="left:763.03px;top:657.00px;font-size:22.40px;line-height:22.40px;font-family:'Liberation Mono';color:#989898;transform:scaleX(0.8578);">39.62</div>
<div class="t" style="left:908.74px;top:657.00px;font-size:22.40px;line-height:22.40px;font-family:'Liberation Mono';color:#989898;transform:scaleX(0.8578);">39.38</div>
<div class="t" style="left:1053.59px;top:657.00px;font-size:22.40px;line-height:22.40px;font-family:'Liberation Mono';color:#989898;transform:scaleX(0.8578);">38.45</div>
<div class="t" style="left:1199.30px;top:657.00px;font-size:22.40px;line-height:22.40px;font-family:'Liberation Mono';color:#989898;transform:scaleX(0.8578);">37.71</div>
<div class="t" style="left:1345.01px;top:657.00px;font-size:22.40px;line-height:22.40px;font-family:'Liberation Mono';color:#989898;transform:scaleX(0.8578);">48.03</div>
<div class="t" style="left:1490.72px;top:657.00px;font-size:22.40px;line-height:22.40px;font-family:'Liberation Mono';color:#989898;transform:scaleX(0.8578);">42.90</div>
<div class="t" style="left:1637.28px;top:657.00px;font-size:22.40px;line-height:22.40px;font-family:'Liberation Mono';color:#989898;transform:scaleX(0.8578);">30.36</div>
<div class="t" style="left:1782.99px;top:657.00px;font-size:22.40px;line-height:22.40px;font-family:'Liberation Mono';color:#989898;transform:scaleX(0.8578);">36.78</div>
<div class="t" style="left:1927.84px;top:657.00px;font-size:22.40px;line-height:22.40px;font-family:'Liberation Mono';color:#989898;transform:scaleX(0.8578);">36.01</div>
<div class="t" style="left:105.33px;top:689.00px;font-size:22.86px;line-height:22.86px;font-family:'Liberation Sans';color:#989898;transform:scaleX(0.8739);">Beverages</div>
<svg style="left:77px;top:688px" width="18" height="17" viewBox="0 0 18 17"><rect x="2.55" y="1.98" width="13.3" height="13" fill="none" stroke="#b4b4b4" stroke-width="1.5"/><line x1="5.40" y1="8.43" x2="13.00" y2="8.43" stroke="#b4b4b4" stroke-width="1.5"/></svg>
<div class="t" style="left:325.91px;top:691.00px;font-size:22.40px;line-height:22.40px;font-family:'Liberation Mono';color:#989898;transform:scaleX(0.8578);">20.59</div>
<div class="t" style="left:470.76px;top:691.00px;font-size:22.40px;line-height:22.40px;font-family:'Liberation Mono';color:#989898;transform:scaleX(0.8578);">20.64</div>
<div class="t" style="left:616.47px;top:691.00px;font-size:22.40px;line-height:22.40px;font-family:'Liberation Mono';color:#989898;transform:scaleX(0.8578);">24.95</div>
<div class="t" style="left:763.03px;top:691.00px;font-size:22.40px;line-height:22.40px;font-family:'Liberation Mono';color:#989898;transform:scaleX(0.8578);">30.88</div>
<div class="t" style="left:907.88px;top:691.00px;font-size:22.40px;line-height:22.40px;font-family:'Liberation Mono';color:#989898;transform:scaleX(0.8578);">29.65</div>
<div class="t" style="left:1053.59px;top:691.00px;font-size:22.40px;line-height:22.40px;font-family:'Liberation Mono';color:#989898;transform:scaleX(0.8578);">27.44</div>
<div class="t" style="left:1200.16px;top:691.00px;font-size:22.40px;line-height:22.40px;font-family:'Liberation Mono';color:#989898;transform:scaleX(0.8578);">27.38</div>
<div class="t" style="left:1345.87px;top:691.00px;font-size:22.40px;line-height:22.40px;font-family:'Liberation Mono';color:#989898;transform:scaleX(0.8578);">37.46</div>
<div class="t" style="left:1490.72px;top:691.00px;font-size:22.40px;line-height:22.40px;font-family:'Liberation Mono';color:#989898;transform:scaleX(0.8578);">32.63</div>
<div class="t" style="left:1636.43px;top:691.00px;font-size:22.40px;line-height:22.40px;font-family:'Liberation Mono';color:#989898;transform:scaleX(0.8578);">22.03</div>
<div class="t" style="left:1782.99px;top:691.00px;font-size:22.40px;line-height:22.40px;font-family:'Liberation Mono';color:#989898;transform:scaleX(0.8578);">27.92</div>
<div class="t" style="left:1927.84px;top:691.00px;font-size:22.40px;line-height:22.40px;font-family:'Liberation Mono';color:#989898;transform:scaleX(0.8578);">26.51</div>
<div class="t" style="left:114.50px;top:722.00px;font-size:22.86px;line-height:22.86px;font-family:'Liberation Sans';color:#afafaf;transform:scaleX(0.8394);">Juices</div>
<div class="t" style="left:325.05px;top:724.00px;font-size:22.40px;line-height:22.40px;font-family:'Liberation Mono';color:#afafaf;transform:scaleX(0.8578);">10.03</div>
<div class="t" style="left:470.76px;top:724.00px;font-size:22.40px;line-height:22.40px;font-family:'Liberation Mono';color:#afafaf;transform:scaleX(0.8578);">12.11</div>
<div class="t" style="left:617.33px;top:724.00px;font-size:22.40px;line-height:22.40px;font-family:'Liberation Mono';color:#afafaf;transform:scaleX(0.8578);">13.17</div>
<div class="t" style="left:763.03px;top:724.00px;font-size:22.40px;line-height:22.40px;font-family:'Liberation Mono';color:#afafaf;transform:scaleX(0.8578);">15.17</div>
<div class="t" style="left:908.74px;top:724.00px;font-size:22.40px;line-height:22.40px;font-family:'Liberation Mono';color:#afafaf;transform:scaleX(0.8578);">15.32</div>
<div class="t" style="left:1053.59px;top:724.00px;font-size:22.40px;line-height:22.40px;font-family:'Liberation Mono';color:#afafaf;transform:scaleX(0.8578);">12.94</div>
<div class="t" style="left:1199.30px;top:724.00px;font-size:22.40px;line-height:22.40px;font-family:'Liberation Mono';color:#afafaf;transform:scaleX(0.8578);">12.03</div>
<div class="t" style="left:1345.87px;top:724.00px;font-size:22.40px;line-height:22.40px;font-family:'Liberation Mono';color:#afafaf;transform:scaleX(0.8578);">17.48</div>
<div class="t" style="left:1491.57px;top:724.00px;font-size:22.40px;line-height:22.40px;font-family:'Liberation Mono';color:#afafaf;transform:scaleX(0.8578);">14.88</div>
<div class="t" style="left:1637.28px;top:724.00px;font-size:22.40px;line-height:22.40px;font-family:'Liberation Mono';color:#afafaf;transform:scaleX(0.8578);">12.62</div>
<div class="t" style="left:1782.13px;top:724.00px;font-size:22.40px;line-height:22.40px;font-family:'Liberation Mono';color:#afafaf;transform:scaleX(0.8578);">14.80</div>
<div class="t" style="left:1928.70px;top:724.00px;font-size:22.40px;line-height:22.40px;font-family:'Liberation Mono';color:#afafaf;transform:scaleX(0.8578);">13.17</div>
<div class="t" style="left:113.64px;top:756.00px;font-size:22.86px;line-height:22.86px;font-family:'Liberation Sans';color:#afafaf;transform:scaleX(0.8586);">Soda</div>
<div class="t" style="left:337.43px;top:758.00px;font-size:22.40px;line-height:22.40px;font-family:'Liberation Mono';color:#afafaf;transform:scaleX(0.8578);">8.06</div>
<div class="t" style="left:483.14px;top:758.00px;font-size:22.40px;line-height:22.40px;font-family:'Liberation Mono';color:#afafaf;transform:scaleX(0.8578);">7.42</div>
<div class="t" style="left:627.99px;top:758.00px;font-size:22.40px;line-height:22.40px;font-family:'Liberation Mono';color:#afafaf;transform:scaleX(0.8578);">9.43</div>
<div class="t" style="left:763.03px;top:758.00px;font-size:22.40px;line-height:22.40px;font-family:'Liberation Mono';color:#afafaf;transform:scaleX(0.8578);">11.92</div>
<div class="t" style="left:908.74px;top:758.00px;font-size:22.40px;line-height:22.40px;font-family:'Liberation Mono';color:#afafaf;transform:scaleX(0.8578);">11.69</div>
<div class="t" style="left:1053.59px;top:758.00px;font-size:22.40px;line-height:22.40px;font-family:'Liberation Mono';color:#afafaf;transform:scaleX(0.8578);">11.55</div>
<div class="t" style="left:1200.16px;top:758.00px;font-size:22.40px;line-height:22.40px;font-family:'Liberation Mono';color:#afafaf;transform:scaleX(0.8578);">11.37</div>
<div class="t" style="left:1345.01px;top:758.00px;font-size:22.40px;line-height:22.40px;font-family:'Liberation Mono';color:#afafaf;transform:scaleX(0.8578);">15.64</div>
<div class="t" style="left:1490.72px;top:758.00px;font-size:22.40px;line-height:22.40px;font-family:'Liberation Mono';color:#afafaf;transform:scaleX(0.8578);">14.24</div>
<div class="t" style="left:1648.81px;top:758.00px;font-size:22.40px;line-height:22.40px;font-family:'Liberation Mono';color:#afafaf;transform:scaleX(0.8578);">7.22</div>
<div class="t" style="left:1782.13px;top:758.00px;font-size:22.40px;line-height:22.40px;font-family:'Liberation Mono';color:#afafaf;transform:scaleX(0.8578);">10.45</div>
<div class="t" style="left:1927.84px;top:758.00px;font-size:22.40px;line-height:22.40px;font-family:'Liberation Mono';color:#afafaf;transform:scaleX(0.8578);">11.24</div>
<div class="t" style="left:114.50px;top:789.00px;font-size:22.86px;line-height:22.86px;font-family:'Liberation Sans';color:#afafaf;transform:scaleX(0.8997);">Tea &amp; Coff...</div>
<div class="t" style="left:336.58px;top:791.00px;font-size:22.40px;line-height:22.40px;font-family:'Liberation Mono';color:#afafaf;transform:scaleX(0.8578);">2.50</div>
<div class="t" style="left:482.29px;top:791.00px;font-size:22.40px;line-height:22.40px;font-family:'Liberation Mono';color:#afafaf;transform:scaleX(0.8578);">1.11</div>
<div class="t" style="left:628.85px;top:791.00px;font-size:22.40px;line-height:22.40px;font-family:'Liberation Mono';color:#afafaf;transform:scaleX(0.8578);">2.36</div>
<div class="t" style="left:774.56px;top:791.00px;font-size:22.40px;line-height:22.40px;font-family:'Liberation Mono';color:#afafaf;transform:scaleX(0.8578);">3.79</div>
<div class="t" style="left:919.41px;top:791.00px;font-size:22.40px;line-height:22.40px;font-family:'Liberation Mono';color:#afafaf;transform:scaleX(0.8578);">2.65</div>
<div class="t" style="left:1065.12px;top:791.00px;font-size:22.40px;line-height:22.40px;font-family:'Liberation Mono';color:#afafaf;transform:scaleX(0.8578);">2.95</div>
<div class="t" style="left:1211.68px;top:791.00px;font-size:22.40px;line-height:22.40px;font-family:'Liberation Mono';color:#afafaf;transform:scaleX(0.8578);">3.99</div>
<div class="t" style="left:1356.54px;top:791.00px;font-size:22.40px;line-height:22.40px;font-family:'Liberation Mono';color:#afafaf;transform:scaleX(0.8578);">4.34</div>
<div class="t" style="left:1503.10px;top:791.00px;font-size:22.40px;line-height:22.40px;font-family:'Liberation Mono';color:#afafaf;transform:scaleX(0.8578);">3.52</div>
<div class="t" style="left:1647.95px;top:791.00px;font-size:22.40px;line-height:22.40px;font-family:'Liberation Mono';color:#afafaf;transform:scaleX(0.8578);">2.20</div>
<div class="t" style="left:1794.52px;top:791.00px;font-size:22.40px;line-height:22.40px;font-family:'Liberation Mono';color:#afafaf;transform:scaleX(0.8578);">2.67</div>
<div class="t" style="left:1939.37px;top:791.00px;font-size:22.40px;line-height:22.40px;font-family:'Liberation Mono';color:#afafaf;transform:scaleX(0.8578);">2.10</div>
<div class="t" style="left:106.20px;top:822.00px;font-size:22.86px;line-height:22.86px;font-family:'Liberation Sans';color:#989898;transform:scaleX(0.9145);">Water</div>
<svg style="left:77px;top:821px" width="18" height="17" viewBox="0 0 18 17"><rect x="2.55" y="2.62" width="13.3" height="13" fill="none" stroke="#b4b4b4" stroke-width="1.5"/><line x1="5.40" y1="9.07" x2="13.00" y2="9.07" stroke="#b4b4b4" stroke-width="1.5"/></svg>
<div class="t" style="left:336.58px;top:824.00px;font-size:22.40px;line-height:22.40px;font-family:'Liberation Mono';color:#989898;transform:scaleX(0.8578);">8.00</div>
<div class="t" style="left:483.14px;top:824.00px;font-size:22.40px;line-height:22.40px;font-family:'Liberation Mono';color:#989898;transform:scaleX(0.8578);">8.92</div>
<div class="t" style="left:628.85px;top:824.00px;font-size:22.40px;line-height:22.40px;font-family:'Liberation Mono';color:#989898;transform:scaleX(0.8578);">9.39</div>
<div class="t" style="left:773.70px;top:824.00px;font-size:22.40px;line-height:22.40px;font-family:'Liberation Mono';color:#989898;transform:scaleX(0.8578);">8.74</div>
<div class="t" style="left:920.27px;top:824.00px;font-size:22.40px;line-height:22.40px;font-family:'Liberation Mono';color:#989898;transform:scaleX(0.8578);">9.72</div>
<div class="t" style="left:1053.59px;top:824.00px;font-size:22.40px;line-height:22.40px;font-family:'Liberation Mono';color:#989898;transform:scaleX(0.8578);">11.01</div>
<div class="t" style="left:1199.30px;top:824.00px;font-size:22.40px;line-height:22.40px;font-family:'Liberation Mono';color:#989898;transform:scaleX(0.8578);">10.33</div>
<div class="t" style="left:1345.87px;top:824.00px;font-size:22.40px;line-height:22.40px;font-family:'Liberation Mono';color:#989898;transform:scaleX(0.8578);">10.57</div>
<div class="t" style="left:1491.57px;top:824.00px;font-size:22.40px;line-height:22.40px;font-family:'Liberation Mono';color:#989898;transform:scaleX(0.8578);">10.27</div>
<div class="t" style="left:1647.95px;top:824.00px;font-size:22.40px;line-height:22.40px;font-family:'Liberation Mono';color:#989898;transform:scaleX(0.8578);">8.33</div>
<div class="t" style="left:1794.52px;top:824.00px;font-size:22.40px;line-height:22.40px;font-family:'Liberation Mono';color:#989898;transform:scaleX(0.8578);">8.86</div>
<div class="t" style="left:1939.37px;top:824.00px;font-size:22.40px;line-height:22.40px;font-family:'Liberation Mono';color:#989898;transform:scaleX(0.8578);">9.50</div>
<div class="t" style="left:113.58px;top:856.00px;font-size:22.86px;line-height:22.86px;font-family:'Liberation Sans';color:#afafaf;transform:scaleX(0.9176);">Mineral W...</div>
<div class="t" style="left:337.43px;top:858.00px;font-size:22.40px;line-height:22.40px;font-family:'Liberation Mono';color:#afafaf;transform:scaleX(0.8578);">6.66</div>
<div class="t" style="left:483.14px;top:858.00px;font-size:22.40px;line-height:22.40px;font-family:'Liberation Mono';color:#afafaf;transform:scaleX(0.8578);">7.38</div>
<div class="t" style="left:627.99px;top:858.00px;font-size:22.40px;line-height:22.40px;font-family:'Liberation Mono';color:#afafaf;transform:scaleX(0.8578);">7.94</div>
<div class="t" style="left:773.70px;top:858.00px;font-size:22.40px;line-height:22.40px;font-family:'Liberation Mono';color:#afafaf;transform:scaleX(0.8578);">7.74</div>
<div class="t" style="left:919.41px;top:858.00px;font-size:22.40px;line-height:22.40px;font-family:'Liberation Mono';color:#afafaf;transform:scaleX(0.8578);">8.74</div>
<div class="t" style="left:1065.12px;top:858.00px;font-size:22.40px;line-height:22.40px;font-family:'Liberation Mono';color:#afafaf;transform:scaleX(0.8578);">9.95</div>
<div class="t" style="left:1211.68px;top:858.00px;font-size:22.40px;line-height:22.40px;font-family:'Liberation Mono';color:#afafaf;transform:scaleX(0.8578);">9.32</div>
<div class="t" style="left:1357.39px;top:858.00px;font-size:22.40px;line-height:22.40px;font-family:'Liberation Mono';color:#afafaf;transform:scaleX(0.8578);">9.66</div>
<div class="t" style="left:1503.10px;top:858.00px;font-size:22.40px;line-height:22.40px;font-family:'Liberation Mono';color:#afafaf;transform:scaleX(0.8578);">9.09</div>
<div class="t" style="left:1647.95px;top:858.00px;font-size:22.40px;line-height:22.40px;font-family:'Liberation Mono';color:#afafaf;transform:scaleX(0.8578);">6.83</div>
<div class="t" style="left:1793.66px;top:858.00px;font-size:22.40px;line-height:22.40px;font-family:'Liberation Mono';color:#afafaf;transform:scaleX(0.8578);">7.43</div>
<div class="t" style="left:1939.37px;top:858.00px;font-size:22.40px;line-height:22.40px;font-family:'Liberation Mono';color:#afafaf;transform:scaleX(0.8578);">8.14</div>
<div class="t" style="left:113.60px;top:889.00px;font-size:22.86px;line-height:22.86px;font-family:'Liberation Sans';color:#afafaf;transform:scaleX(0.8988);">Sparkling ...</div>
<div class="t" style="left:336.58px;top:891.00px;font-size:22.40px;line-height:22.40px;font-family:'Liberation Mono';color:#afafaf;transform:scaleX(0.8578);">1.34</div>
<div class="t" style="left:482.29px;top:891.00px;font-size:22.40px;line-height:22.40px;font-family:'Liberation Mono';color:#afafaf;transform:scaleX(0.8578);">1.54</div>
<div class="t" style="left:627.99px;top:891.00px;font-size:22.40px;line-height:22.40px;font-family:'Liberation Mono';color:#afafaf;transform:scaleX(0.8578);">1.45</div>
<div class="t" style="left:773.70px;top:891.00px;font-size:22.40px;line-height:22.40px;font-family:'Liberation Mono';color:#afafaf;transform:scaleX(0.8578);">1.01</div>
<div class="t" style="left:920.27px;top:891.00px;font-size:22.40px;line-height:22.40px;font-family:'Liberation Mono';color:#afafaf;transform:scaleX(0.8578);">0.99</div>
<div class="t" style="left:1065.98px;top:891.00px;font-size:22.40px;line-height:22.40px;font-family:'Liberation Mono';color:#afafaf;transform:scaleX(0.8578);">1.06</div>
<div class="t" style="left:1210.83px;top:891.00px;font-size:22.40px;line-height:22.40px;font-family:'Liberation Mono';color:#afafaf;transform:scaleX(0.8578);">1.01</div>
<div class="t" style="left:1356.54px;top:891.00px;font-size:22.40px;line-height:22.40px;font-family:'Liberation Mono';color:#afafaf;transform:scaleX(0.8578);">0.91</div>
<div class="t" style="left:1503.10px;top:891.00px;font-size:22.40px;line-height:22.40px;font-family:'Liberation Mono';color:#afafaf;transform:scaleX(0.8578);">1.18</div>
<div class="t" style="left:1648.81px;top:891.00px;font-size:22.40px;line-height:22.40px;font-family:'Liberation Mono';color:#afafaf;transform:scaleX(0.8578);">1.49</div>
<div class="t" style="left:1793.66px;top:891.00px;font-size:22.40px;line-height:22.40px;font-family:'Liberation Mono';color:#afafaf;transform:scaleX(0.8578);">1.43</div>
<div class="t" style="left:1940.23px;top:891.00px;font-size:22.40px;line-height:22.40px;font-family:'Liberation Mono';color:#afafaf;transform:scaleX(0.8578);">1.36</div>
<div class="t" style="left:87.05px;top:923.00px;font-size:22.86px;line-height:22.86px;font-family:'Liberation Sans';color:#989898;transform:scaleX(0.8480);">EMEA</div>
<svg style="left:59px;top:922px" width="18" height="17" viewBox="0 0 18 17"><rect x="2.55" y="1.85" width="13.3" height="13" fill="none" stroke="#b4b4b4" stroke-width="1.5"/><line x1="5.40" y1="8.30" x2="13.00" y2="8.30" stroke="#b4b4b4" stroke-width="1.5"/></svg>
<div class="t" style="left:325.91px;top:925.00px;font-size:22.40px;line-height:22.40px;font-family:'Liberation Mono';color:#989898;transform:scaleX(0.8578);">61.68</div>
<div class="t" style="left:471.62px;top:925.00px;font-size:22.40px;line-height:22.40px;font-family:'Liberation Mono';color:#989898;transform:scaleX(0.8578);">67.39</div>
<div class="t" style="left:616.47px;top:925.00px;font-size:22.40px;line-height:22.40px;font-family:'Liberation Mono';color:#989898;transform:scaleX(0.8578);">71.43</div>
<div class="t" style="left:763.03px;top:925.00px;font-size:22.40px;line-height:22.40px;font-family:'Liberation Mono';color:#989898;transform:scaleX(0.8578);">76.88</div>
<div class="t" style="left:908.74px;top:925.00px;font-size:22.40px;line-height:22.40px;font-family:'Liberation Mono';color:#989898;transform:scaleX(0.8578);">88.19</div>
<div class="t" style="left:1054.45px;top:925.00px;font-size:22.40px;line-height:22.40px;font-family:'Liberation Mono';color:#989898;transform:scaleX(0.8578);">86.76</div>
<div class="t" style="left:1199.30px;top:925.00px;font-size:22.40px;line-height:22.40px;font-family:'Liberation Mono';color:#989898;transform:scaleX(0.8578);">85.91</div>
<div class="t" style="left:1345.87px;top:925.00px;font-size:22.40px;line-height:22.40px;font-family:'Liberation Mono';color:#989898;transform:scaleX(0.8578);">86.62</div>
<div class="t" style="left:1490.72px;top:925.00px;font-size:22.40px;line-height:22.40px;font-family:'Liberation Mono';color:#989898;transform:scaleX(0.8578);">84.80</div>
<div class="t" style="left:1637.28px;top:925.00px;font-size:22.40px;line-height:22.40px;font-family:'Liberation Mono';color:#989898;transform:scaleX(0.8578);">65.86</div>
<div class="t" style="left:1782.13px;top:925.00px;font-size:22.40px;line-height:22.40px;font-family:'Liberation Mono';color:#989898;transform:scaleX(0.8578);">74.64</div>
<div class="t" style="left:1927.84px;top:925.00px;font-size:22.40px;line-height:22.40px;font-family:'Liberation Mono';color:#989898;transform:scaleX(0.8578);">67.85</div>
<div class="t" style="left:105.33px;top:956.00px;font-size:22.86px;line-height:22.86px;font-family:'Liberation Sans';color:#989898;transform:scaleX(0.8739);">Beverages</div>
<svg style="left:77px;top:955px" width="18" height="17" viewBox="0 0 18 17"><rect x="2.55" y="2.26" width="13.3" height="13" fill="none" stroke="#b4b4b4" stroke-width="1.5"/><line x1="5.40" y1="8.71" x2="13.00" y2="8.71" stroke="#b4b4b4" stroke-width="1.5"/></svg>
<div class="t" style="left:325.91px;top:958.00px;font-size:22.40px;line-height:22.40px;font-family:'Liberation Mono';color:#989898;transform:scaleX(0.8578);">45.39</div>
<div class="t" style="left:470.76px;top:958.00px;font-size:22.40px;line-height:22.40px;font-family:'Liberation Mono';color:#989898;transform:scaleX(0.8578);">50.81</div>
<div class="t" style="left:617.33px;top:958.00px;font-size:22.40px;line-height:22.40px;font-family:'Liberation Mono';color:#989898;transform:scaleX(0.8578);">52.09</div>
<div class="t" style="left:763.03px;top:958.00px;font-size:22.40px;line-height:22.40px;font-family:'Liberation Mono';color:#989898;transform:scaleX(0.8578);">57.32</div>
<div class="t" style="left:908.74px;top:958.00px;font-size:22.40px;line-height:22.40px;font-family:'Liberation Mono';color:#989898;transform:scaleX(0.8578);">67.37</div>
<div class="t" style="left:1053.59px;top:958.00px;font-size:22.40px;line-height:22.40px;font-family:'Liberation Mono';color:#989898;transform:scaleX(0.8578);">67.40</div>
<div class="t" style="left:1200.16px;top:958.00px;font-size:22.40px;line-height:22.40px;font-family:'Liberation Mono';color:#989898;transform:scaleX(0.8578);">64.02</div>
<div class="t" style="left:1345.87px;top:958.00px;font-size:22.40px;line-height:22.40px;font-family:'Liberation Mono';color:#989898;transform:scaleX(0.8578);">64.47</div>
<div class="t" style="left:1491.57px;top:958.00px;font-size:22.40px;line-height:22.40px;font-family:'Liberation Mono';color:#989898;transform:scaleX(0.8578);">64.19</div>
<div class="t" style="left:1637.28px;top:958.00px;font-size:22.40px;line-height:22.40px;font-family:'Liberation Mono';color:#989898;transform:scaleX(0.8578);">47.27</div>
<div class="t" style="left:1782.99px;top:958.00px;font-size:22.40px;line-height:22.40px;font-family:'Liberation Mono';color:#989898;transform:scaleX(0.8578);">56.66</div>
<div class="t" style="left:1928.70px;top:958.00px;font-size:22.40px;line-height:22.40px;font-family:'Liberation Mono';color:#989898;transform:scaleX(0.8578);">50.76</div>
<div class="t" style="left:114.50px;top:990.00px;font-size:22.86px;line-height:22.86px;font-family:'Liberation Sans';color:#afafaf;transform:scaleX(0.8394);">Juices</div>
<div class="t" style="left:325.05px;top:992.00px;font-size:22.40px;line-height:22.40px;font-family:'Liberation Mono';color:#afafaf;transform:scaleX(0.8578);">22.71</div>
<div class="t" style="left:471.62px;top:992.00px;font-size:22.40px;line-height:22.40px;font-family:'Liberation Mono';color:#afafaf;transform:scaleX(0.8578);">25.97</div>
<div class="t" style="left:616.47px;top:992.00px;font-size:22.40px;line-height:22.40px;font-family:'Liberation Mono';color:#afafaf;transform:scaleX(0.8578);">27.35</div>
<div class="t" style="left:763.03px;top:992.00px;font-size:22.40px;line-height:22.40px;font-family:'Liberation Mono';color:#afafaf;transform:scaleX(0.8578);">29.92</div>
<div class="t" style="left:907.88px;top:992.00px;font-size:22.40px;line-height:22.40px;font-family:'Liberation Mono';color:#afafaf;transform:scaleX(0.8578);">38.91</div>
<div class="t" style="left:1054.45px;top:992.00px;font-size:22.40px;line-height:22.40px;font-family:'Liberation Mono';color:#afafaf;transform:scaleX(0.8578);">34.07</div>
<div class="t" style="left:1200.16px;top:992.00px;font-size:22.40px;line-height:22.40px;font-family:'Liberation Mono';color:#afafaf;transform:scaleX(0.8578);">26.39</div>
<div class="t" style="left:1345.87px;top:992.00px;font-size:22.40px;line-height:22.40px;font-family:'Liberation Mono';color:#afafaf;transform:scaleX(0.8578);">25.16</div>
<div class="t" style="left:1490.72px;top:992.00px;font-size:22.40px;line-height:22.40px;font-family:'Liberation Mono';color:#afafaf;transform:scaleX(0.8578);">24.04</div>
<div class="t" style="left:1636.43px;top:992.00px;font-size:22.40px;line-height:22.40px;font-family:'Liberation Mono';color:#afafaf;transform:scaleX(0.8578);">25.41</div>
<div class="t" style="left:1782.99px;top:992.00px;font-size:22.40px;line-height:22.40px;font-family:'Liberation Mono';color:#afafaf;transform:scaleX(0.8578);">27.87</div>
<div class="t" style="left:1927.84px;top:992.00px;font-size:22.40px;line-height:22.40px;font-family:'Liberation Mono';color:#afafaf;transform:scaleX(0.8578);">24.34</div>
<div class="t" style="left:113.64px;top:1023.00px;font-size:22.86px;line-height:22.86px;font-family:'Liberation Sans';color:#afafaf;transform:scaleX(0.8586);">Soda</div>
<div class="t" style="left:325.05px;top:1025.00px;font-size:22.40px;line-height:22.40px;font-family:'Liberation Mono';color:#afafaf;transform:scaleX(0.8578);">17.04</div>
<div class="t" style="left:471.62px;top:1025.00px;font-size:22.40px;line-height:22.40px;font-family:'Liberation Mono';color:#afafaf;transform:scaleX(0.8578);">19.56</div>
<div class="t" style="left:617.33px;top:1025.00px;font-size:22.40px;line-height:22.40px;font-family:'Liberation Mono';color:#afafaf;transform:scaleX(0.8578);">19.37</div>
<div class="t" style="left:762.18px;top:1025.00px;font-size:22.40px;line-height:22.40px;font-family:'Liberation Mono';color:#afafaf;transform:scaleX(0.8578);">17.94</div>
<div class="t" style="left:907.88px;top:1025.00px;font-size:22.40px;line-height:22.40px;font-family:'Liberation Mono';color:#afafaf;transform:scaleX(0.8578);">20.15</div>
<div class="t" style="left:1053.59px;top:1025.00px;font-size:22.40px;line-height:22.40px;font-family:'Liberation Mono';color:#afafaf;transform:scaleX(0.8578);">23.55</div>
<div class="t" style="left:1199.30px;top:1025.00px;font-size:22.40px;line-height:22.40px;font-family:'Liberation Mono';color:#afafaf;transform:scaleX(0.8578);">26.61</div>
<div class="t" style="left:1345.87px;top:1025.00px;font-size:22.40px;line-height:22.40px;font-family:'Liberation Mono';color:#afafaf;transform:scaleX(0.8578);">29.98</div>
<div class="t" style="left:1491.57px;top:1025.00px;font-size:22.40px;line-height:22.40px;font-family:'Liberation Mono';color:#afafaf;transform:scaleX(0.8578);">30.42</div>
<div class="t" style="left:1637.28px;top:1025.00px;font-size:22.40px;line-height:22.40px;font-family:'Liberation Mono';color:#afafaf;transform:scaleX(0.8578);">17.49</div>
<div class="t" style="left:1782.99px;top:1025.00px;font-size:22.40px;line-height:22.40px;font-family:'Liberation Mono';color:#afafaf;transform:scaleX(0.8578);">24.69</div>
<div class="t" style="left:1928.70px;top:1025.00px;font-size:22.40px;line-height:22.40px;font-family:'Liberation Mono';color:#afafaf;transform:scaleX(0.8578);">20.18</div>
<div class="t" style="left:114.50px;top:1056.00px;font-size:22.86px;line-height:22.86px;font-family:'Liberation Sans';color:#afafaf;transform:scaleX(0.8997);">Tea &amp; Coff...</div>
<div class="t" style="left:336.58px;top:1058.00px;font-size:22.40px;line-height:22.40px;font-family:'Liberation Mono';color:#afafaf;transform:scaleX(0.8578);">5.63</div>
<div class="t" style="left:483.14px;top:1058.00px;font-size:22.40px;line-height:22.40px;font-family:'Liberation Mono';color:#afafaf;transform:scaleX(0.8578);">5.28</div>
<div class="t" style="left:628.85px;top:1058.00px;font-size:22.40px;line-height:22.40px;font-family:'Liberation Mono';color:#afafaf;transform:scaleX(0.8578);">5.36</div>
<div class="t" style="left:774.56px;top:1058.00px;font-size:22.40px;line-height:22.40px;font-family:'Liberation Mono';color:#afafaf;transform:scaleX(0.8578);">9.46</div>
<div class="t" style="left:920.27px;top:1058.00px;font-size:22.40px;line-height:22.40px;font-family:'Liberation Mono';color:#afafaf;transform:scaleX(0.8578);">8.32</div>
<div class="t" style="left:1065.98px;top:1058.00px;font-size:22.40px;line-height:22.40px;font-family:'Liberation Mono';color:#afafaf;transform:scaleX(0.8578);">9.78</div>
<div class="t" style="left:1200.16px;top:1058.00px;font-size:22.40px;line-height:22.40px;font-family:'Liberation Mono';color:#afafaf;transform:scaleX(0.8578);">11.02</div>
<div class="t" style="left:1356.54px;top:1058.00px;font-size:22.40px;line-height:22.40px;font-family:'Liberation Mono';color:#afafaf;transform:scaleX(0.8578);">9.33</div>
<div class="t" style="left:1502.24px;top:1058.00px;font-size:22.40px;line-height:22.40px;font-family:'Liberation Mono';color:#afafaf;transform:scaleX(0.8578);">9.73</div>
<div class="t" style="left:1648.81px;top:1058.00px;font-size:22.40px;line-height:22.40px;font-family:'Liberation Mono';color:#afafaf;transform:scaleX(0.8578);">4.37</div>
<div class="t" style="left:1793.66px;top:1058.00px;font-size:22.40px;line-height:22.40px;font-family:'Liberation Mono';color:#afafaf;transform:scaleX(0.8578);">4.10</div>
<div class="t" style="left:1939.37px;top:1058.00px;font-size:22.40px;line-height:22.40px;font-family:'Liberation Mono';color:#afafaf;transform:scaleX(0.8578);">6.24</div>
<div class="t" style="left:106.20px;top:1090.00px;font-size:22.86px;line-height:22.86px;font-family:'Liberation Sans';color:#989898;transform:scaleX(0.9145);">Water</div>
<svg style="left:77px;top:1089px" width="18" height="17" viewBox="0 0 18 17"><rect x="2.55" y="1.90" width="13.3" height="13" fill="none" stroke="#b4b4b4" stroke-width="1.5"/><line x1="5.40" y1="8.35" x2="13.00" y2="8.35" stroke="#b4b4b4" stroke-width="1.5"/></svg>
<div class="t" style="left:325.91px;top:1092.00px;font-size:22.40px;line-height:22.40px;font-family:'Liberation Mono';color:#989898;transform:scaleX(0.8578);">16.29</div>
<div class="t" style="left:471.62px;top:1092.00px;font-size:22.40px;line-height:22.40px;font-family:'Liberation Mono';color:#989898;transform:scaleX(0.8578);">16.58</div>
<div class="t" style="left:616.47px;top:1092.00px;font-size:22.40px;line-height:22.40px;font-family:'Liberation Mono';color:#989898;transform:scaleX(0.8578);">19.35</div>
<div class="t" style="left:763.03px;top:1092.00px;font-size:22.40px;line-height:22.40px;font-family:'Liberation Mono';color:#989898;transform:scaleX(0.8578);">19.56</div>
<div class="t" style="left:908.74px;top:1092.00px;font-size:22.40px;line-height:22.40px;font-family:'Liberation Mono';color:#989898;transform:scaleX(0.8578);">20.82</div>
<div class="t" style="left:1054.45px;top:1092.00px;font-size:22.40px;line-height:22.40px;font-family:'Liberation Mono';color:#989898;transform:scaleX(0.8578);">19.36</div>
<div class="t" style="left:1200.16px;top:1092.00px;font-size:22.40px;line-height:22.40px;font-family:'Liberation Mono';color:#989898;transform:scaleX(0.8578);">21.89</div>
<div class="t" style="left:1345.87px;top:1092.00px;font-size:22.40px;line-height:22.40px;font-family:'Liberation Mono';color:#989898;transform:scaleX(0.8578);">22.16</div>
<div class="t" style="left:1491.57px;top:1092.00px;font-size:22.40px;line-height:22.40px;font-family:'Liberation Mono';color:#989898;transform:scaleX(0.8578);">20.62</div>
<div class="t" style="left:1637.28px;top:1092.00px;font-size:22.40px;line-height:22.40px;font-family:'Liberation Mono';color:#989898;transform:scaleX(0.8578);">18.59</div>
<div class="t" style="left:1782.99px;top:1092.00px;font-size:22.40px;line-height:22.40px;font-family:'Liberation Mono';color:#989898;transform:scaleX(0.8578);">17.98</div>
<div class="t" style="left:1928.70px;top:1092.00px;font-size:22.40px;line-height:22.40px;font-family:'Liberation Mono';color:#989898;transform:scaleX(0.8578);">17.09</div>
<div class="t" style="left:113.58px;top:1123.00px;font-size:22.86px;line-height:22.86px;font-family:'Liberation Sans';color:#afafaf;transform:scaleX(0.9176);">Mineral W...</div>
<div class="t" style="left:325.05px;top:1125.00px;font-size:22.40px;line-height:22.40px;font-family:'Liberation Mono';color:#afafaf;transform:scaleX(0.8578);">13.55</div>
<div class="t" style="left:471.62px;top:1125.00px;font-size:22.40px;line-height:22.40px;font-family:'Liberation Mono';color:#afafaf;transform:scaleX(0.8578);">13.92</div>
<div class="t" style="left:616.47px;top:1125.00px;font-size:22.40px;line-height:22.40px;font-family:'Liberation Mono';color:#afafaf;transform:scaleX(0.8578);">15.20</div>
<div class="t" style="left:762.18px;top:1125.00px;font-size:22.40px;line-height:22.40px;font-family:'Liberation Mono';color:#afafaf;transform:scaleX(0.8578);">16.70</div>
<div class="t" style="left:907.88px;top:1125.00px;font-size:22.40px;line-height:22.40px;font-family:'Liberation Mono';color:#afafaf;transform:scaleX(0.8578);">18.14</div>
<div class="t" style="left:1053.59px;top:1125.00px;font-size:22.40px;line-height:22.40px;font-family:'Liberation Mono';color:#afafaf;transform:scaleX(0.8578);">16.00</div>
<div class="t" style="left:1200.16px;top:1125.00px;font-size:22.40px;line-height:22.40px;font-family:'Liberation Mono';color:#afafaf;transform:scaleX(0.8578);">19.39</div>
<div class="t" style="left:1345.01px;top:1125.00px;font-size:22.40px;line-height:22.40px;font-family:'Liberation Mono';color:#afafaf;transform:scaleX(0.8578);">19.84</div>
<div class="t" style="left:1491.57px;top:1125.00px;font-size:22.40px;line-height:22.40px;font-family:'Liberation Mono';color:#afafaf;transform:scaleX(0.8578);">17.92</div>
<div class="t" style="left:1637.28px;top:1125.00px;font-size:22.40px;line-height:22.40px;font-family:'Liberation Mono';color:#afafaf;transform:scaleX(0.8578);">15.42</div>
<div class="t" style="left:1782.99px;top:1125.00px;font-size:22.40px;line-height:22.40px;font-family:'Liberation Mono';color:#afafaf;transform:scaleX(0.8578);">14.99</div>
<div class="t" style="left:1928.70px;top:1125.00px;font-size:22.40px;line-height:22.40px;font-family:'Liberation Mono';color:#afafaf;transform:scaleX(0.8578);">14.28</div>
<div class="t" style="left:113.60px;top:1157.00px;font-size:22.86px;line-height:22.86px;font-family:'Liberation Sans';color:#afafaf;transform:scaleX(0.8988);">Sparkling ...</div>
<div class="t" style="left:336.58px;top:1159.00px;font-size:22.40px;line-height:22.40px;font-family:'Liberation Mono';color:#afafaf;transform:scaleX(0.8578);">2.75</div>
<div class="t" style="left:483.14px;top:1159.00px;font-size:22.40px;line-height:22.40px;font-family:'Liberation Mono';color:#afafaf;transform:scaleX(0.8578);">2.66</div>
<div class="t" style="left:627.99px;top:1159.00px;font-size:22.40px;line-height:22.40px;font-family:'Liberation Mono';color:#afafaf;transform:scaleX(0.8578);">4.15</div>
<div class="t" style="left:774.56px;top:1159.00px;font-size:22.40px;line-height:22.40px;font-family:'Liberation Mono';color:#afafaf;transform:scaleX(0.8578);">2.86</div>
<div class="t" style="left:920.27px;top:1159.00px;font-size:22.40px;line-height:22.40px;font-family:'Liberation Mono';color:#afafaf;transform:scaleX(0.8578);">2.68</div>
<div class="t" style="left:1065.12px;top:1159.00px;font-size:22.40px;line-height:22.40px;font-family:'Liberation Mono';color:#afafaf;transform:scaleX(0.8578);">3.35</div>
<div class="t" style="left:1210.83px;top:1159.00px;font-size:22.40px;line-height:22.40px;font-family:'Liberation Mono';color:#afafaf;transform:scaleX(0.8578);">2.50</div>
<div class="t" style="left:1356.54px;top:1159.00px;font-size:22.40px;line-height:22.40px;font-family:'Liberation Mono';color:#afafaf;transform:scaleX(0.8578);">2.31</div>
<div class="t" style="left:1502.24px;top:1159.00px;font-size:22.40px;line-height:22.40px;font-family:'Liberation Mono';color:#afafaf;transform:scaleX(0.8578);">2.70</div>
<div class="t" style="left:1648.81px;top:1159.00px;font-size:22.40px;line-height:22.40px;font-family:'Liberation Mono';color:#afafaf;transform:scaleX(0.8578);">3.17</div>
<div class="t" style="left:1794.52px;top:1159.00px;font-size:22.40px;line-height:22.40px;font-family:'Liberation Mono';color:#afafaf;transform:scaleX(0.8578);">2.99</div>
<div class="t" style="left:1939.37px;top:1159.00px;font-size:22.40px;line-height:22.40px;font-family:'Liberation Mono';color:#afafaf;transform:scaleX(0.8578);">2.81</div>
<div class="t" style="left:69.04px;top:1190.00px;font-size:22.86px;line-height:22.86px;font-family:'Liberation Sans';font-weight:bold;color:#9a9a9a;transform:scaleX(0.8637);">United States</div>
<svg style="left:41px;top:1189px" width="18" height="17" viewBox="0 0 18 17"><rect x="2.25" y="2.13" width="13.3" height="13" fill="none" stroke="#b4b4b4" stroke-width="1.5"/><line x1="5.10" y1="8.58" x2="12.70" y2="8.58" stroke="#b4b4b4" stroke-width="1.5"/></svg>
<div class="t" style="left:311.47px;top:1192.00px;font-size:22.40px;line-height:22.40px;font-family:'Liberation Mono';font-weight:bold;color:#9a9a9a;transform:scaleX(0.8834);">149.23</div>
<div class="t" style="left:457.18px;top:1192.00px;font-size:22.40px;line-height:22.40px;font-family:'Liberation Mono';font-weight:bold;color:#9a9a9a;transform:scaleX(0.8834);">152.36</div>
<div class="t" style="left:602.89px;top:1192.00px;font-size:22.40px;line-height:22.40px;font-family:'Liberation Mono';font-weight:bold;color:#9a9a9a;transform:scaleX(0.8834);">158.59</div>
<div class="t" style="left:748.60px;top:1192.00px;font-size:22.40px;line-height:22.40px;font-family:'Liberation Mono';font-weight:bold;color:#9a9a9a;transform:scaleX(0.8834);">174.59</div>
<div class="t" style="left:894.30px;top:1192.00px;font-size:22.40px;line-height:22.40px;font-family:'Liberation Mono';font-weight:bold;color:#9a9a9a;transform:scaleX(0.8834);">194.54</div>
<div class="t" style="left:1040.01px;top:1192.00px;font-size:22.40px;line-height:22.40px;font-family:'Liberation Mono';font-weight:bold;color:#9a9a9a;transform:scaleX(0.8834);">197.56</div>
<div class="t" style="left:1185.72px;top:1192.00px;font-size:22.40px;line-height:22.40px;font-family:'Liberation Mono';font-weight:bold;color:#9a9a9a;transform:scaleX(0.8834);">194.81</div>
<div class="t" style="left:1331.43px;top:1192.00px;font-size:22.40px;line-height:22.40px;font-family:'Liberation Mono';font-weight:bold;color:#9a9a9a;transform:scaleX(0.8834);">213.08</div>
<div class="t" style="left:1477.14px;top:1192.00px;font-size:22.40px;line-height:22.40px;font-family:'Liberation Mono';font-weight:bold;color:#9a9a9a;transform:scaleX(0.8834);">195.39</div>
<div class="t" style="left:1622.85px;top:1192.00px;font-size:22.40px;line-height:22.40px;font-family:'Liberation Mono';font-weight:bold;color:#9a9a9a;transform:scaleX(0.8834);">156.10</div>
<div class="t" style="left:1769.44px;top:1192.00px;font-size:22.40px;line-height:22.40px;font-family:'Liberation Mono';font-weight:bold;color:#9a9a9a;transform:scaleX(0.8834);">158.67</div>
<div class="t" style="left:1914.26px;top:1192.00px;font-size:22.40px;line-height:22.40px;font-family:'Liberation Mono';font-weight:bold;color:#9a9a9a;transform:scaleX(0.8834);">143.28</div>
<div style="left:29.10px;top:419.60px;width:89.10px;height:52.20px;background:#f6f6f6;border:1.8px solid #939393;box-shadow:inset 0 0 0 1px #fff"></div>
<div class="t" style="left:36.00px;top:436.00px;font-size:22.86px;line-height:22.86px;font-family:'Liberation Sans';font-weight:bold;color:#e4e4e4;transform:scaleX(1.2814);filter:blur(0.5px);">Qtr 1</div>
<div class="t" style="left:39.89px;top:435.00px;font-size:22.43px;line-height:22.43px;font-family:'Liberation Sans';color:#444;transform:scaleX(0.9065);">Header</div>
<div style="left:244.00px;top:409.80px;width:57.30px;height:22.50px;background:#8a8a8a;border-radius:12px"></div>
<div style="left:258.40px;top:418.30px;width:5.00px;height:5.00px;background:#fff;border-radius:50%"></div>
<div style="left:270.70px;top:418.30px;width:5.00px;height:5.00px;background:#fff;border-radius:50%"></div>
<div style="left:283.10px;top:418.30px;width:5.00px;height:5.00px;background:#fff;border-radius:50%"></div>
<svg style="left:1110px;top:435px" width="44" height="44" viewBox="0 0 44 44"><g transform="translate(-1110,-435)"><circle cx="1132" cy="457.3" r="17.1" fill="#fff" stroke="#333" stroke-width="1.9"/><path d="M1137 447.9 L1128 456.8 L1137 465.6" fill="none" stroke="#333" stroke-width="1.6"/></g></svg>
<svg style="left:1173px;top:435px" width="44" height="44" viewBox="0 0 44 44"><g transform="translate(-1173,-435)"><circle cx="1195.5" cy="457.3" r="17.1" fill="#fff" stroke="#333" stroke-width="1.9"/><path d="M1190.5 447.9 L1199.5 456.8 L1190.5 465.6" fill="none" stroke="#333" stroke-width="1.6"/></g></svg>
<div style="left:2027.60px;top:416.60px;width:103.40px;height:46.60px;background:#fff;border:2px solid #c9c9c9"></div>
<svg style="left:2043px;top:430px" width="28" height="20" viewBox="0 0 28 20"><path d="M3.1 11.6 Q14.2 -2.1 24.3 11.4" fill="none" stroke="#3a3a3a" stroke-width="1.5"/><line x1="5.9" y1="2.9" x2="19.5" y2="16.9" stroke="#3a3a3a" stroke-width="1.5"/><circle cx="13.5" cy="12.8" r="2.3" fill="none" stroke="#2a5aa8" stroke-width="1.4"/></svg>
<div class="t" style="left:2081.96px;top:432.00px;font-size:17.14px;line-height:17.14px;font-family:'Liberation Sans';color:#444;transform:scaleX(1.0387);">Hide</div>
<div style="left:2140.00px;top:416.60px;width:147.50px;height:46.60px;background:#0078d4"></div>
<svg style="left:2154px;top:429px" width="20" height="20" viewBox="0 0 20 20"><path d="M2 2 L18 18 M18 2 L2 18" stroke="#fff" stroke-width="1.8"/></svg>
<div class="t" style="left:2180.00px;top:433.00px;font-size:16.86px;line-height:16.86px;font-family:'Liberation Sans';color:#fff;transform:scaleX(1.0354);">Close Editor</div>
<div style="left:4.00px;top:1247.00px;width:2295.00px;height:2.00px;background:#e8e8e8"></div>
<div class="t" style="left:5.00px;top:1262.00px;font-size:21.43px;line-height:21.43px;font-family:'Liberation Sans';color:#333;transform:scaleX(0.9927);">Total rows: 51</div>
<svg style="left:1565px;top:1257px" width="34" height="34" viewBox="0 0 34 34"><g transform="translate(16.5,16.5)"><g fill="#fff" stroke="#444" stroke-width="1.6"><path d="M-2.3 -13.4 H2.3 L2.8 -8 H-2.8 Z" transform="rotate(0)"/><path d="M-2.3 -13.4 H2.3 L2.8 -8 H-2.8 Z" transform="rotate(45)"/><path d="M-2.3 -13.4 H2.3 L2.8 -8 H-2.8 Z" transform="rotate(90)"/><path d="M-2.3 -13.4 H2.3 L2.8 -8 H-2.8 Z" transform="rotate(135)"/><path d="M-2.3 -13.4 H2.3 L2.8 -8 H-2.8 Z" transform="rotate(180)"/><path d="M-2.3 -13.4 H2.3 L2.8 -8 H-2.8 Z" transform="rotate(225)"/><path d="M-2.3 -13.4 H2.3 L2.8 -8 H-2.8 Z" transform="rotate(270)"/><path d="M-2.3 -13.4 H2.3 L2.8 -8 H-2.8 Z" transform="rotate(315)"/></g><circle r="9.6" fill="#fff" stroke="#444" stroke-width="1.6"/><g fill="#fff"><rect x="-1.3" y="-11" width="2.6" height="4" transform="rotate(0)"/><rect x="-1.3" y="-11" width="2.6" height="4" transform="rotate(45)"/><rect x="-1.3" y="-11" width="2.6" height="4" transform="rotate(90)"/><rect x="-1.3" y="-11" width="2.6" height="4" transform="rotate(135)"/><rect x="-1.3" y="-11" width="2.6" height="4" transform="rotate(180)"/><rect x="-1.3" y="-11" width="2.6" height="4" transform="rotate(225)"/><rect x="-1.3" y="-11" width="2.6" height="4" transform="rotate(270)"/><rect x="-1.3" y="-11" width="2.6" height="4" transform="rotate(315)"/></g><circle r="5.6" fill="none" stroke="#1d4f9a" stroke-width="1.8"/></g></svg>
<div style="left:1615.60px;top:1272.50px;width:17.90px;height:2.10px;background:#333"></div>
<div style="left:1648.50px;top:1258.30px;width:100.60px;height:35.80px;border:2px solid #a3a3a3"></div>
<div class="t" style="left:1671.64px;top:1266.00px;font-size:22.50px;line-height:22.50px;font-family:'Liberation Mono';color:#333;transform:scaleX(0.9589);">100</div>
<div class="t" style="left:1711.50px;top:1266.00px;font-size:21.86px;line-height:21.86px;font-family:'Liberation Sans';color:#333;transform:scaleX(0.8105);">%</div>
<div style="left:1759.40px;top:1273.00px;width:19.00px;height:2.10px;background:#333"></div>
<div style="left:1767.80px;top:1264.80px;width:2.10px;height:18.50px;background:#333"></div>
<svg style="left:1828px;top:1258px" width="50" height="26" viewBox="0 0 50 26"><g fill="none" stroke="#a8a8a8" stroke-width="2.6"><line x1="6.2" y1="5" x2="6.2" y2="22"/><path d="M22 5.5 L14 13.5 L22 21.5"/><path d="M44 5.5 L36 13.5 L44 21.5"/></g></svg>
<div class="t" style="left:1883.78px;top:1262.00px;font-size:21.00px;line-height:21.00px;font-family:'Liberation Sans';color:#333;transform:scaleX(0.9184);">Page</div>
<div style="left:1936.00px;top:1253.00px;width:45.30px;height:35.30px;background:#fff;border:1.5px solid #dcdcdc"></div>
<div class="t" style="left:1953.55px;top:1262.00px;font-size:21.00px;line-height:21.00px;font-family:'Liberation Sans';color:#333;transform:scaleX(0.9500);">1</div>
<div class="t" style="left:1989.70px;top:1262.00px;font-size:21.00px;line-height:21.00px;font-family:'Liberation Sans';color:#333;transform:scaleX(1.0044);">of 3</div>
<svg style="left:2030px;top:1258px" width="52" height="26" viewBox="0 0 52 26"><g fill="none" stroke="#222" stroke-width="2.8"><path d="M8 5.5 L16 13.5 L8 21.5"/><path d="M30 5.5 L38 13.5 L30 21.5"/><line x1="45" y1="4.5" x2="45" y2="23"/></g></svg>
<div class="t" style="left:2163.65px;top:1262.00px;font-size:21.00px;line-height:21.00px;font-family:'Liberation Sans';color:#333;transform:scaleX(0.8500);">1</div>
<div class="t" style="left:2184.00px;top:1262.00px;font-size:21.00px;line-height:21.00px;font-family:'Liberation Sans';color:#333;transform:scaleX(1.1286);">to</div>
<div class="t" style="left:2212.99px;top:1262.00px;font-size:21.00px;line-height:21.00px;font-family:'Liberation Sans';color:#333;transform:scaleX(1.0148);">19</div>
<div class="t" style="left:2247.00px;top:1262.00px;font-size:21.00px;line-height:21.00px;font-family:'Liberation Sans';color:#333;transform:scaleX(1.0181);">of</div>
<div class="t" style="left:2275.50px;top:1262.00px;font-size:21.00px;line-height:21.00px;font-family:'Liberation Sans';color:#333;transform:scaleX(0.9612);">51</div>
</body></html>
